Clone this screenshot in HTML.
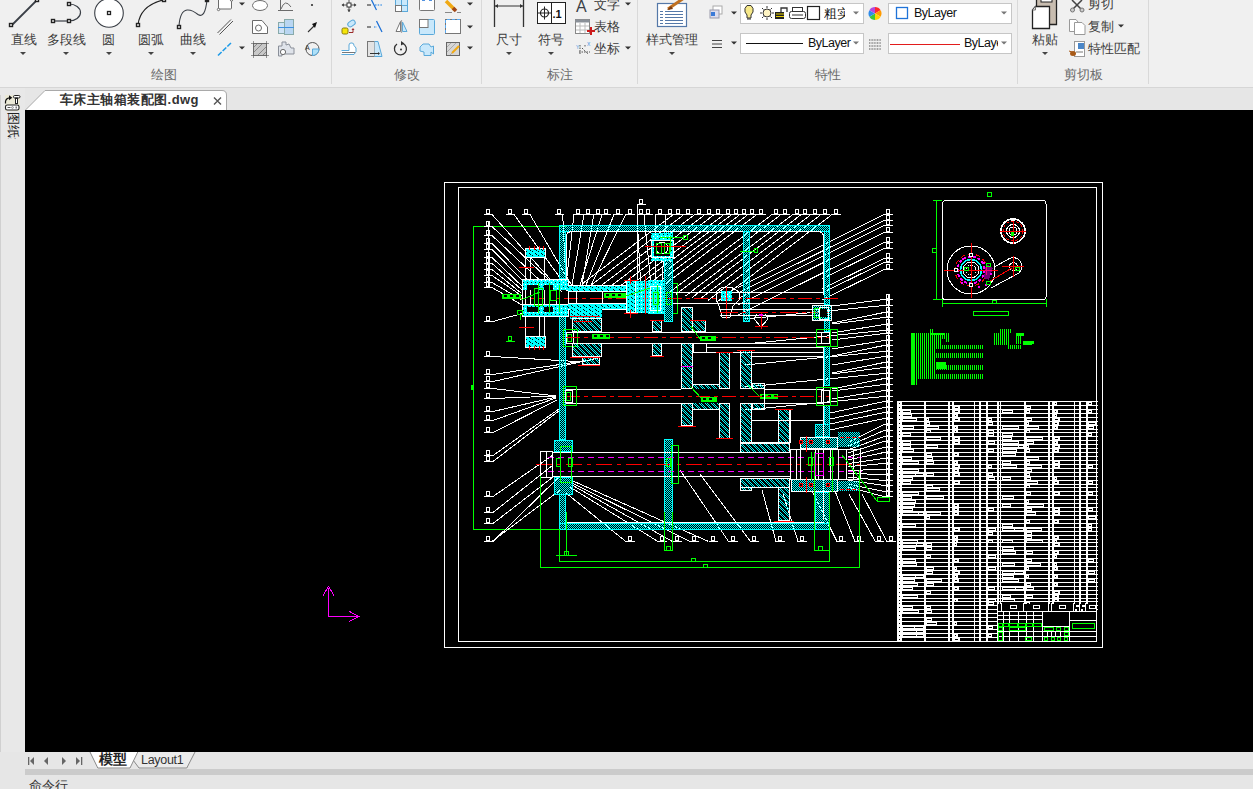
<!DOCTYPE html>
<html><head><meta charset="utf-8">
<style>
*{box-sizing:border-box}
html,body{margin:0;padding:0;width:1253px;height:789px;overflow:hidden;background:#e6e6e6;font-family:"Liberation Sans",sans-serif;}
.a{position:absolute}
#ribbon{left:0;top:0;width:1253px;height:88px;background:#f0f0f0;border-bottom:1px solid #d6d6d6}
.t{position:absolute;font-size:13px;line-height:13px;color:#3c3c3c;white-space:nowrap}
.g{position:absolute;font-size:13px;line-height:13px;color:#6a6a6a;white-space:nowrap}
.sep{position:absolute;top:0;width:1px;height:84px;background:#d9d9d9}
.arr{position:absolute;width:0;height:0;border-left:3px solid transparent;border-right:3px solid transparent;border-top:3px solid #444}
.box{position:absolute;background:#fff;border:1px solid #c8c8c8}
#canvas{left:25px;top:110px;width:1228px;height:642px;background:#000}
</style></head><body>
<div id="ribbon" class="a">
  <!-- draw group big buttons -->
  <svg class="a" style="left:0;top:0" width="1253" height="87">
<g fill="none" stroke="#3a3f46" stroke-width="1">
<line x1="11.5" y1="25.5" x2="37" y2="0" stroke-width="1.8"/>
<rect x="9.5" y="23.5" width="3" height="3" fill="#fff" stroke-width="1.4" stroke="#222"/>
<rect x="35.5" y="-1.5" width="3" height="3" fill="#fff" stroke-width="1.4" stroke="#222"/>
<line x1="54" y1="21" x2="69" y2="21" stroke-width="1.2"/>
<path d="M69 4 A11.5 8.5 0 0 1 69 21" stroke-width="1.2"/>
<rect x="51.5" y="19.5" width="3" height="3" fill="#fff" stroke-width="1.4" stroke="#222"/>
<rect x="67.5" y="19.5" width="3" height="3" fill="#fff" stroke-width="1.4" stroke="#222"/>
<rect x="67.5" y="2.5" width="3" height="3" fill="#fff" stroke-width="1.4" stroke="#222"/>
<circle cx="109" cy="13" r="14.3" fill="#fff" stroke-width="1.1"/>
<rect x="107.5" y="11.5" width="3" height="3" stroke-width="1.3" stroke="#222"/>
<path d="M138 25 Q140 6 163 0" stroke="#222" stroke-width="1.2"/>
<rect x="136.5" y="23.5" width="3" height="3" fill="#fff" stroke-width="1.4" stroke="#222"/>
<rect x="162.5" y="-1.5" width="3" height="3" fill="#fff" stroke-width="1.4" stroke="#222"/>
<path d="M179 26 Q180 11 187 10 Q192 9.5 198 14.5 Q205 19 207 0" stroke-width="1.1"/>
<rect x="177.5" y="25.5" width="3" height="3" fill="#fff" stroke-width="1.4" stroke="#222"/>
<rect x="205.5" y="-1.5" width="3" height="3" fill="#222" stroke-width="1.4" stroke="#222"/>
</g>
<g fill="none" stroke="#6b6b6b" stroke-width="1">
<rect x="218.5" y="-2.5" width="13" height="11.5" rx="1" fill="#fff"/>
<circle cx="218.5" cy="9.5" r="1.2" fill="#fff"/><circle cx="231.5" cy="0" r="1.2" fill="#fff"/>
<ellipse cx="260" cy="5.5" rx="7.5" ry="5" fill="#fff"/>
<path d="M280.5 0 V11 M278 10.5 H293 M281 9 Q285 -2 291 7" />
<path d="M217.5 33 L231 19.5 M219.5 34.5 L233 21" stroke="#555"/>
<path d="M252.5 33.5 V20.5 H262 L267.5 27 V33.5 Z" fill="#fff"/><circle cx="258.5" cy="28" r="3"/>
<path d="M218 55.5 L232 42" stroke="#1e9be8" stroke-width="1.6" stroke-dasharray="5 1.5"/>
<rect x="253.5" y="43.5" width="13" height="12" fill="#c8c8c8" stroke="#888"/>
<path d="M254 47 L258 43 M254 52 L263 43 M258 55 L266 47 M263 55 L266 52" stroke="#888"/>
<path d="M251 43.5 H269 M251 55.5 H269 M253.5 41 V58 M266.5 41 V58" stroke="#555" stroke-width=".6"/>
<path d="M278.5 46 H282 V42 H286 V45 L289 44 L291 48 H294 V54 H282 V56 H278.5 Z" fill="#dfe3ea" stroke="#8a8f99"/><circle cx="283" cy="52" r="2.6" fill="#fff"/>
<circle cx="312.5" cy="49" r="6.5" stroke="#555"/><path d="M312.5 49 V55.5 A6.5 6.5 0 0 0 319 49 Z" fill="#aee0f8" stroke="#5aa9da"/>
<text x="305" y="50" font-size="7" font-family="Liberation Sans" fill="#333" stroke="none">A</text>
</g>
<path d="M280 27.5 H294" stroke="#5aa9f0"/>
<rect x="278.5" y="22.5" width="9" height="11" fill="#cfe3f7" stroke="#8aa"/><rect x="284.5" y="19.5" width="9" height="15" fill="#b9d6f2" stroke="#8aa"/><path d="M278 27.5 H294" stroke="#3b8fe0"/>
<circle cx="312" cy="5" r="1.1" fill="#333"/>
<path d="M308 32 L314 26" stroke="#333" stroke-width="1.1"/><path d="M312 24 L317 22 L315 28 Z" fill="#111"/>
<g stroke="#333" fill="#333">
<path d="M342 5 H356 M349 -2 V12" stroke-width="0.9" stroke="#444"/>
<path d="M341.5 5 L344 3.2 V6.8 Z M356.5 5 L354 3.2 V6.8 Z M349 12 L347.2 9.5 H350.8 Z" fill="#444" stroke="none"/>
</g>
<rect x="347" y="3" width="4" height="4" fill="#fff" stroke="#333"/>
<path d="M367 5 H371" stroke="#666" stroke-width="1.5"/><path d="M371.5 0 L376.5 10" stroke="#1a6fd6" stroke-width="1.2"/><path d="M375 5 H383" stroke="#5aa0e8" stroke-width="1.3" stroke-dasharray="1.5 1.2"/>
<rect x="395.5" y="-0.5" width="12" height="12" fill="#c9e8fb" stroke="#5aa9da"/><path d="M401.5 -1 V12 M395 5.5 H408" stroke="#5aa9da"/><rect x="395.5" y="5.5" width="6" height="6" fill="#fff" stroke="#777"/>
<rect x="419.5" y="-1.5" width="15" height="12" rx="1" fill="#fff" stroke="#777"/><path d="M422 0 H425 M429 0 H432" stroke="#1a6fd6" stroke-width="1.5"/>
<path d="M446 1 L455 10" stroke="#f0a914" stroke-width="3.5"/><path d="M453 8 L456 11" stroke="#a0481b" stroke-width="3.5"/><path d="M445 12.5 H452 M457 12.5 H461" stroke="#888"/>
<rect x="342" y="28" width="6" height="6" rx="1.5" fill="#f5e50a" stroke="#887a10"/>
<rect x="347.5" y="21" width="8" height="5" rx="2.5" transform="rotate(-35 351.5 23.5)" fill="#c9e8fb" stroke="#5aa9da"/>
<path d="M349 32.5 H353 V30" fill="none" stroke="#9b2a2a" stroke-width="1"/><path d="M351.5 30 L353 28 L354.5 30 Z" fill="#9b2a2a"/>
<path d="M367 27 H371" stroke="#666" stroke-width="1.5"/><path d="M374 27 H377" stroke="#5aa0e8" stroke-width="1.3" stroke-dasharray="1.5 1.2"/><path d="M376.5 21 L382 32" stroke="#1a6fd6" stroke-width="1.2"/>
<path d="M400.5 21.5 L396 31.5 H400.5 Z" fill="#fff" stroke="#777"/><path d="M402.5 22 L407 31.5 H402.5 Z" fill="#c9e8fb" stroke="#5aa9da"/><path d="M401.5 20 V33" stroke="#aaa" stroke-width="1.2"/>
<rect x="419.5" y="19.5" width="15" height="15" rx="1" fill="#c9e8fb" stroke="#5aa9da"/><rect x="419.5" y="19.5" width="8.5" height="8" fill="#fff" stroke="#777"/>
<rect x="445.5" y="19.5" width="15" height="14" fill="#fff" stroke="#777"/><path d="M445.5 33 V19.5 H460" fill="none" stroke="#5aa9f0" stroke-dasharray="3 2"/>
<path d="M341.5 50.5 H349 V45 Q349 43 351 43 H352 Q354 43 354 45.5 L356 48 Q357 52 354 54.5 H341.5" fill="#fff" stroke="#5aa9da"/><path d="M342 52.5 H355" stroke="#777"/>
<rect x="367.5" y="41.5" width="7" height="15" fill="#e3e3e3" stroke="#777"/><path d="M374.5 41.5 H378 L382 56.5 H374.5" fill="#c9e8fb" stroke="#5aa9da"/><path d="M370 53.5 H378" stroke="#333"/><path d="M378 52 L380 53.5 L378 55Z" fill="#333"/>
<path d="M397 44 A6 6 0 1 0 403 43.5" fill="none" stroke="#333" stroke-width="1.3"/><path d="M401 41 L404.5 43.5 L401 45.5Z" fill="#333"/><circle cx="401" cy="49.5" r="1" fill="#333"/>
<path d="M420 47 L423 44 H429 L431 47 L433.5 46 V54 L431 52 V55.5 H424 V52 L420 51 Z" fill="#c9e8fb" stroke="#5aa9da"/>
<rect x="446.5" y="42.5" width="13" height="13" fill="#d6d6d6" stroke="#666"/><path d="M447 47 L451 43 M447 52 L456 43 M450 55 L459 46" stroke="#aaa"/><path d="M452 53 L459 46" stroke="#f0a914" stroke-width="2"/>
<path d="M494.5 0 V27 M523.5 0 V27" stroke="#333" stroke-width="1.3"/><path d="M495 6 H523" stroke="#333"/><path d="M495 6 L498 4 V8Z M523 6 L520 4 V8Z" fill="#333"/>
<rect x="537.5" y="2.5" width="28" height="21" fill="#fff" stroke="#222"/><path d="M551.5 2.5 V23.5" stroke="#222"/>
<circle cx="544.5" cy="13" r="4" fill="none" stroke="#222" stroke-width="1.2"/><path d="M538 13 H551 M544.5 6.5 V19.5" stroke="#222"/>
<text x="552.5" y="18" font-size="11" font-weight="bold" font-family="Liberation Sans" fill="#111">.1</text>
<text x="576" y="12" font-size="16" font-family="Liberation Sans" fill="#3a3f46">A</text>
<rect x="575.5" y="19.5" width="14" height="14" fill="#fff" stroke="#888"/><rect x="575.5" y="19.5" width="14" height="3" fill="#8b9199"/><path d="M576 26 H589 M576 30 H589 M580 23 V33 M585 23 V33" stroke="#bbb"/><path d="M591 27 V35 M587 31 H595" stroke="#cc1b1b" stroke-width="2"/>
<path d="M580 45 V55 M579 52 H590 M582 48 L588 54 M585 45 V47" stroke="#555" stroke-dasharray="1.5 1"/><text x="576" y="49" font-size="5" fill="#3b8fe0">Y</text><text x="587" y="46" font-size="5" fill="#3b8fe0">X</text>
<rect x="657.5" y="3.5" width="29" height="23" fill="#fff" stroke="#5478a8" stroke-width="1.2"/>
<path d="M660 11.5 H663 M665 11.5 H683" stroke="#5478a8" stroke-width="1"/>
<path d="M660 14.5 H663 M665 14.5 H683" stroke="#5478a8" stroke-width="1"/>
<path d="M660 17.5 H663 M665 17.5 H683" stroke="#5478a8" stroke-width="1"/>
<path d="M660 20.5 H663 M665 20.5 H683" stroke="#5478a8" stroke-width="1"/>
<path d="M660 23.5 H663 M665 23.5 H683" stroke="#5478a8" stroke-width="1"/>
<path d="M668 9 L684 -2" stroke="#c07020" stroke-width="3"/><path d="M667 10 L671 6 L673 9 Z" fill="#7a3a10"/>
<rect x="713" y="6" width="9" height="8" fill="#fff" stroke="#aaa"/><rect x="710" y="10" width="9" height="8" fill="#dde" stroke="#99a"/><rect x="711" y="12" width="4" height="4" fill="#3b7ad8"/>
<path d="M712 40.5 H722 M712 44 H722 M712 47.5 H722" stroke="#444" stroke-width="1.2"/>
<rect x="740.5" y="3.5" width="123" height="20" fill="#fff" stroke="#c6c6c6"/>
<rect x="740.5" y="33.5" width="123" height="20" fill="#fff" stroke="#c6c6c6"/>
<rect x="888.5" y="3.5" width="123" height="20" fill="#fff" stroke="#c6c6c6"/>
<rect x="888.5" y="33.5" width="123" height="20" fill="#fff" stroke="#c6c6c6"/>
<path d="M747 5.5 Q744 8 745 12 L747 15 V18 H751 V15 L753 12 Q754 8 751 5.5 Z" fill="#f7e98a" stroke="#333"/><path d="M747 19 H751" stroke="#333"/>
<circle cx="767" cy="13" r="4" fill="#fdf3c2" stroke="#333"/><path d="M767 6 V8 M767 18 V20 M760 13 H762 M772 13 H774 M762 8 L763.5 9.5 M772 8 L770.5 9.5 M762 18 L763.5 16.5 M772 18 L770.5 16.5" stroke="#333"/>
<rect x="775" y="12" width="9" height="7" fill="#222"/><path d="M776 14 H784 M776 16.5 H784" stroke="#e8d000" stroke-width="1"/><path d="M781 12 V8 H787 V12" fill="none" stroke="#333" stroke-width="1.3"/>
<rect x="789.5" y="11.5" width="16" height="7" rx="2" fill="#fff" stroke="#333"/><rect x="792.5" y="7.5" width="10" height="4" fill="#fff" stroke="#333"/><path d="M792 15 H803" stroke="#333"/>
<rect x="807.5" y="6.5" width="12" height="13" fill="#fff" stroke="#222" stroke-width="1.2"/>
<circle cx="875" cy="13.5" r="6.5" fill="#fff"/>
<path d="M875 13.5 L875.00 7.00 A6.5 6.5 0 0 1 880.63 10.25 Z" fill="#ff2a2a"/>
<path d="M875 13.5 L880.63 10.25 A6.5 6.5 0 0 1 880.63 16.75 Z" fill="#ff9a00"/>
<path d="M875 13.5 L880.63 16.75 A6.5 6.5 0 0 1 875.00 20.00 Z" fill="#ffd500"/>
<path d="M875 13.5 L875.00 20.00 A6.5 6.5 0 0 1 869.37 16.75 Z" fill="#3cc63c"/>
<path d="M875 13.5 L869.37 16.75 A6.5 6.5 0 0 1 869.37 10.25 Z" fill="#2f8ce8"/>
<path d="M875 13.5 L869.37 10.25 A6.5 6.5 0 0 1 875.00 7.00 Z" fill="#b04ae0"/>
<path d="M869 40 H881 M869 43 H881 M869 46 H881 M869 49 H881" stroke="#555" stroke-dasharray="1 .6"/>
<rect x="896.5" y="7.5" width="11" height="11" fill="none" stroke="#1f73d8" stroke-width="1.3"/>
<path d="M746 43.5 H803" stroke="#111" stroke-width="1.2"/>
<path d="M890 44.5 H960" stroke="#e21c1c" stroke-width="1.2"/>
<path d="M1036.5 0 V24.5 H1056.5 V0" fill="#c8bdb0" stroke="#222" stroke-width="1.3"/><rect x="1041" y="-2" width="11" height="4" fill="#fff" stroke="#222"/>
<path d="M1035.5 6.5 H1049.5 V28.5 H1032.5 V10 Z" fill="#fff" stroke="#222" stroke-width="1.3"/><path d="M1032.5 10 H1035.5 V6.5" fill="#ddd" stroke="#777"/>
<path d="M1072 0 L1083 11 M1082 0 L1071 11" stroke="#444" stroke-width="1.5"/><circle cx="1072.5" cy="10" r="2" fill="#ccc" stroke="#777"/><circle cx="1082" cy="10" r="2" fill="#ccc" stroke="#777"/>
<path d="M1069.5 19.5 H1076 L1078 22 V31.5 H1069.5 Z" fill="#fff" stroke="#999"/><path d="M1074.5 22.5 H1082 L1085 25.5 V34.5 H1074.5 Z" fill="#fff" stroke="#999"/>
<rect x="1074.5" y="41.5" width="10" height="15" fill="#fff" stroke="#999"/><rect x="1078" y="43" width="6" height="6" fill="#4a86c8"/><path d="M1076 52 H1083" stroke="#777"/><ellipse cx="1073" cy="53.5" rx="3" ry="2.5" fill="#a85a18"/><path d="M1069 51 L1072 52" stroke="#a85a18"/>
<path d="M239 2.5 H245 L242 5.5 Z" fill="#333"/>
<path d="M239 46.5 H245 L242 49.5 Z" fill="#333"/>
<path d="M467 2.5 H473 L470 5.5 Z" fill="#333"/>
<path d="M467 25.5 H473 L470 28.5 Z" fill="#333"/>
<path d="M467 46.5 H473 L470 49.5 Z" fill="#333"/>
<path d="M625 2.5 H631 L628 5.5 Z" fill="#333"/>
<path d="M625 46.5 H631 L628 49.5 Z" fill="#333"/>
<path d="M731 11.5 H737 L734 14.5 Z" fill="#333"/>
<path d="M731 41.5 H737 L734 44.5 Z" fill="#333"/>
<path d="M1118 24.5 H1124 L1121 27.5 Z" fill="#333"/>
<path d="M853 11.5 H859 L856 14.5 Z" fill="#777"/>
<path d="M853 41.5 H859 L856 44.5 Z" fill="#777"/>
<path d="M1001 11.5 H1007 L1004 14.5 Z" fill="#777"/>
<path d="M1001 41.5 H1007 L1004 44.5 Z" fill="#777"/>
</svg>

  <div class="t" style="left:11px;top:33px">直线</div>
  <div class="t" style="left:47px;top:33px">多段线</div>
  <div class="t" style="left:102px;top:33px">圆</div>
  <div class="t" style="left:138px;top:33px">圆弧</div>
  <div class="t" style="left:180px;top:33px">曲线</div>
  <div class="arr" style="left:20px;top:52px"></div>
  <div class="arr" style="left:63px;top:52px"></div>
  <div class="arr" style="left:106px;top:52px"></div>
  <div class="arr" style="left:148px;top:52px"></div>
  <div class="arr" style="left:190px;top:52px"></div>

  <div class="t" style="left:496px;top:33px">尺寸</div>
  <div class="t" style="left:538px;top:33px">符号</div>
  <div class="t" style="left:594px;top:-2px">文字</div>
  <div class="t" style="left:594px;top:20px">表格</div>
  <div class="t" style="left:594px;top:42px">坐标</div>
  <div class="arr" style="left:506px;top:52px"></div>
  <div class="arr" style="left:548px;top:52px"></div>
  <div class="t" style="left:646px;top:33px">样式管理</div>
  <div class="arr" style="left:669px;top:52px"></div>
  <div class="t" style="left:824px;top:7px;font-size:13px;width:21px;overflow:hidden;color:#111">粗实</div>
  <div class="t" style="left:808px;top:37px;color:#111;font-size:12.5px;letter-spacing:-0.5px">ByLayer</div>
  <div class="t" style="left:914px;top:7px;color:#111;font-size:12.5px;letter-spacing:-0.5px">ByLayer</div>
  <div class="t" style="left:964px;top:37px;color:#111;width:34px;overflow:hidden;font-size:12.5px;letter-spacing:-0.5px">ByLayer</div>
  <div class="t" style="left:1032px;top:33px">粘贴</div>
  <div class="arr" style="left:1042px;top:52px"></div>
  <div class="t" style="left:1088px;top:-3px">剪切</div>
  <div class="t" style="left:1088px;top:20px">复制</div>
  <div class="t" style="left:1088px;top:42px">特性匹配</div>
  <div class="g" style="left:151px;top:68px">绘图</div>
  <div class="sep" style="left:331px"></div>
  <div class="g" style="left:394px;top:68px">修改</div>
  <div class="sep" style="left:481px"></div>
  <div class="g" style="left:547px;top:68px">标注</div>
  <div class="sep" style="left:637px"></div>
  <div class="g" style="left:815px;top:68px">特性</div>
  <div class="sep" style="left:1017px"></div>
  <div class="g" style="left:1064px;top:68px">剪切板</div>
  <div class="sep" style="left:1148px"></div>
</div>
<div id="canvas" class="a"></div>
<svg class="a" style="left:25px;top:110px" width="1228" height="642" viewBox="25 110 1228 642" shape-rendering="crispEdges">
<defs>
<pattern id="hw" width="2" height="2" patternUnits="userSpaceOnUse"><rect x="0" y="0" width="1" height="1" fill="#00ffff"/><rect x="1" y="1" width="1" height="1" fill="#00ffff"/></pattern>
<pattern id="hg" width="6" height="6" patternUnits="userSpaceOnUse"><rect x="2" y="0" width="1" height="1" fill="#00ffff"/><rect x="4" y="0" width="1" height="1" fill="#00ffff"/><rect x="3" y="1" width="1" height="1" fill="#00ffff"/><rect x="5" y="1" width="1" height="1" fill="#00ffff"/><rect x="0" y="2" width="1" height="1" fill="#00ffff"/><rect x="4" y="2" width="1" height="1" fill="#00ffff"/><rect x="1" y="3" width="1" height="1" fill="#00ffff"/><rect x="5" y="3" width="1" height="1" fill="#00ffff"/><rect x="0" y="4" width="1" height="1" fill="#00ffff"/><rect x="2" y="4" width="1" height="1" fill="#00ffff"/><rect x="1" y="5" width="1" height="1" fill="#00ffff"/><rect x="3" y="5" width="1" height="1" fill="#00ffff"/></pattern>
<pattern id="hc" width="4" height="4" patternUnits="userSpaceOnUse"><rect x="0" y="0" width="1" height="1" fill="#00ffff"/><rect x="1" y="0" width="1" height="1" fill="#ffffff"/><rect x="2" y="0" width="1" height="1" fill="#00ffff"/><rect x="3" y="0" width="1" height="1" fill="#00ffff"/><rect x="0" y="1" width="1" height="1" fill="#00ffff"/><rect x="1" y="1" width="1" height="1" fill="#00ffff"/><rect x="2" y="1" width="1" height="1" fill="#00ffff"/><rect x="3" y="1" width="1" height="1" fill="#00ffff"/><rect x="0" y="2" width="1" height="1" fill="#00ffff"/><rect x="1" y="2" width="1" height="1" fill="#00ffff"/><rect x="2" y="2" width="1" height="1" fill="#00ffff"/><rect x="0" y="3" width="1" height="1" fill="#00ffff"/><rect x="1" y="3" width="1" height="1" fill="#00ffff"/><rect x="2" y="3" width="1" height="1" fill="#00ffff"/><rect x="3" y="3" width="1" height="1" fill="#00ffff"/></pattern>
<pattern id="hs" width="6" height="4" patternUnits="userSpaceOnUse"><rect width="6" height="4" fill="#00ffff"/><rect x="1" y="1" width="1" height="1" fill="#000"/><rect x="2" y="2" width="1" height="1" fill="#000"/><rect x="4" y="3" width="1" height="1" fill="#000"/></pattern>
<pattern id="gbar" width="2" height="4" patternUnits="userSpaceOnUse"><rect width="1" height="4" fill="#00ff00"/></pattern>
</defs>
<path d="M328.5 588 V616.5 H358.5" fill="none" stroke="#ff00ff" stroke-width="1.3"/>
<path d="M323 595.5 L328.5 586.5 L334 595.5 M349.5 611.5 L358.5 616.5 L349.5 621.5" fill="none" stroke="#ff00ff" stroke-width="1"/>
<rect x="444.5" y="182.5" width="658" height="465" stroke="#ffffff" fill="none" stroke-width="1"/>
<rect x="458.5" y="187.5" width="638" height="454" stroke="#ffffff" fill="none" stroke-width="1"/>
<line x1="473.5" y1="226" x2="473.5" y2="530" stroke="#00ff00" stroke-width="1"/>
<line x1="473" y1="226.5" x2="566" y2="226.5" stroke="#00ff00" stroke-width="1"/>
<line x1="473" y1="529.5" x2="560" y2="529.5" stroke="#00ff00" stroke-width="1"/>
<rect x="471" y="385" width="3" height="5" fill="#00ff00"/>
<line x1="492" y1="214.5" x2="560" y2="290" stroke="#ffffff" stroke-width="1"/>
<line x1="514" y1="214.5" x2="566" y2="286" stroke="#ffffff" stroke-width="1"/>
<line x1="530" y1="214.5" x2="572" y2="286" stroke="#ffffff" stroke-width="1"/>
<line x1="562.7" y1="214.5" x2="566" y2="283" stroke="#ffffff" stroke-width="1"/>
<line x1="574" y1="214.5" x2="566" y2="285" stroke="#ffffff" stroke-width="1"/>
<line x1="584" y1="214.5" x2="572" y2="285" stroke="#ffffff" stroke-width="1"/>
<line x1="593.8" y1="214.5" x2="582" y2="285" stroke="#ffffff" stroke-width="1"/>
<line x1="602" y1="214.5" x2="580" y2="285" stroke="#ffffff" stroke-width="1"/>
<line x1="614" y1="214.5" x2="586" y2="285" stroke="#ffffff" stroke-width="1"/>
<line x1="625.7" y1="214.5" x2="591" y2="285" stroke="#ffffff" stroke-width="1"/>
<line x1="637" y1="214.5" x2="641" y2="290" stroke="#ffffff" stroke-width="1"/>
<line x1="644" y1="214.5" x2="651" y2="285" stroke="#ffffff" stroke-width="1"/>
<line x1="656" y1="214.5" x2="655" y2="285" stroke="#ffffff" stroke-width="1"/>
<line x1="666" y1="214.5" x2="662" y2="285" stroke="#ffffff" stroke-width="1"/>
<line x1="673.5" y1="214.5" x2="582.6776315789474" y2="283.525" stroke="#ffffff" stroke-width="1"/>
<line x1="684" y1="214.5" x2="592.2105263157895" y2="284.26" stroke="#ffffff" stroke-width="1"/>
<line x1="694.8" y1="214.5" x2="602.0157894736841" y2="285.016" stroke="#ffffff" stroke-width="1"/>
<line x1="705" y1="214.5" x2="611.2763157894736" y2="285.73" stroke="#ffffff" stroke-width="1"/>
<line x1="714.3" y1="214.5" x2="619.7197368421052" y2="286.381" stroke="#ffffff" stroke-width="1"/>
<line x1="724" y1="214.5" x2="628.5263157894736" y2="287.06" stroke="#ffffff" stroke-width="1"/>
<line x1="731.7" y1="214.5" x2="635.517105263158" y2="287.599" stroke="#ffffff" stroke-width="1"/>
<line x1="740" y1="214.5" x2="643.0526315789474" y2="288.18" stroke="#ffffff" stroke-width="1"/>
<line x1="748" y1="214.5" x2="650.3157894736842" y2="288.74" stroke="#ffffff" stroke-width="1"/>
<line x1="756.7" y1="214.5" x2="658.2144736842106" y2="289.349" stroke="#ffffff" stroke-width="1"/>
<line x1="772" y1="214.5" x2="668.8301435406698" y2="292.90909090909093" stroke="#ffffff" stroke-width="1"/>
<line x1="781" y1="214.5" x2="676.0358851674641" y2="294.27272727272725" stroke="#ffffff" stroke-width="1"/>
<line x1="792.7" y1="214.5" x2="685.4033492822966" y2="296.04545454545456" stroke="#ffffff" stroke-width="1"/>
<line x1="801.3" y1="214.5" x2="692.2888357256778" y2="297.3484848484848" stroke="#ffffff" stroke-width="1"/>
<line x1="811" y1="214.5" x2="700.055023923445" y2="298.8181818181818" stroke="#ffffff" stroke-width="1"/>
<line x1="821" y1="214.5" x2="708.061403508772" y2="300.3333333333333" stroke="#ffffff" stroke-width="1"/>
<line x1="832" y1="214.5" x2="716.8684210526316" y2="302.0" stroke="#ffffff" stroke-width="1"/>
<line x1="637.5" y1="204" x2="637.5" y2="283" stroke="#ffffff" stroke-width="1"/>
<rect x="639.5" y="199.5" width="3" height="4" fill="none" stroke="#ffffff"/>
<line x1="637" y1="204.5" x2="646" y2="204.5" stroke="#ffffff" stroke-width="1"/>
<rect x="486.5" y="209.5" width="3" height="4" fill="none" stroke="#ffffff"/>
<line x1="484" y1="214.5" x2="493" y2="214.5" stroke="#ffffff" stroke-width="1"/>
<rect x="508.5" y="209.5" width="3" height="4" fill="none" stroke="#ffffff"/>
<line x1="506" y1="214.5" x2="515" y2="214.5" stroke="#ffffff" stroke-width="1"/>
<rect x="524.5" y="209.5" width="3" height="4" fill="none" stroke="#ffffff"/>
<line x1="522" y1="214.5" x2="531" y2="214.5" stroke="#ffffff" stroke-width="1"/>
<rect x="557.2" y="209.5" width="3" height="4" fill="none" stroke="#ffffff"/>
<line x1="554.7" y1="214.5" x2="563.7" y2="214.5" stroke="#ffffff" stroke-width="1"/>
<rect x="576.5" y="209.5" width="3" height="4" fill="none" stroke="#ffffff"/>
<line x1="574" y1="214.5" x2="583" y2="214.5" stroke="#ffffff" stroke-width="1"/>
<rect x="586.5" y="209.5" width="3" height="4" fill="none" stroke="#ffffff"/>
<line x1="584" y1="214.5" x2="593" y2="214.5" stroke="#ffffff" stroke-width="1"/>
<rect x="596.3" y="209.5" width="3" height="4" fill="none" stroke="#ffffff"/>
<line x1="593.8" y1="214.5" x2="602.8" y2="214.5" stroke="#ffffff" stroke-width="1"/>
<rect x="604.5" y="209.5" width="3" height="4" fill="none" stroke="#ffffff"/>
<line x1="602" y1="214.5" x2="611" y2="214.5" stroke="#ffffff" stroke-width="1"/>
<rect x="616.5" y="209.5" width="3" height="4" fill="none" stroke="#ffffff"/>
<line x1="614" y1="214.5" x2="623" y2="214.5" stroke="#ffffff" stroke-width="1"/>
<rect x="628.2" y="209.5" width="3" height="4" fill="none" stroke="#ffffff"/>
<line x1="625.7" y1="214.5" x2="634.7" y2="214.5" stroke="#ffffff" stroke-width="1"/>
<rect x="639.5" y="209.5" width="3" height="4" fill="none" stroke="#ffffff"/>
<line x1="637" y1="214.5" x2="646" y2="214.5" stroke="#ffffff" stroke-width="1"/>
<rect x="646.5" y="209.5" width="3" height="4" fill="none" stroke="#ffffff"/>
<line x1="644" y1="214.5" x2="653" y2="214.5" stroke="#ffffff" stroke-width="1"/>
<rect x="658.5" y="209.5" width="3" height="4" fill="none" stroke="#ffffff"/>
<line x1="656" y1="214.5" x2="665" y2="214.5" stroke="#ffffff" stroke-width="1"/>
<rect x="668.5" y="209.5" width="3" height="4" fill="none" stroke="#ffffff"/>
<line x1="666" y1="214.5" x2="675" y2="214.5" stroke="#ffffff" stroke-width="1"/>
<rect x="676.0" y="209.5" width="3" height="4" fill="none" stroke="#ffffff"/>
<line x1="673.5" y1="214.5" x2="682.5" y2="214.5" stroke="#ffffff" stroke-width="1"/>
<rect x="686.5" y="209.5" width="3" height="4" fill="none" stroke="#ffffff"/>
<line x1="684" y1="214.5" x2="693" y2="214.5" stroke="#ffffff" stroke-width="1"/>
<rect x="697.3" y="209.5" width="3" height="4" fill="none" stroke="#ffffff"/>
<line x1="694.8" y1="214.5" x2="703.8" y2="214.5" stroke="#ffffff" stroke-width="1"/>
<rect x="707.5" y="209.5" width="3" height="4" fill="none" stroke="#ffffff"/>
<line x1="705" y1="214.5" x2="714" y2="214.5" stroke="#ffffff" stroke-width="1"/>
<rect x="716.8" y="209.5" width="3" height="4" fill="none" stroke="#ffffff"/>
<line x1="714.3" y1="214.5" x2="723.3" y2="214.5" stroke="#ffffff" stroke-width="1"/>
<rect x="726.5" y="209.5" width="3" height="4" fill="none" stroke="#ffffff"/>
<line x1="724" y1="214.5" x2="733" y2="214.5" stroke="#ffffff" stroke-width="1"/>
<rect x="734.2" y="209.5" width="3" height="4" fill="none" stroke="#ffffff"/>
<line x1="731.7" y1="214.5" x2="740.7" y2="214.5" stroke="#ffffff" stroke-width="1"/>
<rect x="742.5" y="209.5" width="3" height="4" fill="none" stroke="#ffffff"/>
<line x1="740" y1="214.5" x2="749" y2="214.5" stroke="#ffffff" stroke-width="1"/>
<rect x="750.5" y="209.5" width="3" height="4" fill="none" stroke="#ffffff"/>
<line x1="748" y1="214.5" x2="757" y2="214.5" stroke="#ffffff" stroke-width="1"/>
<rect x="759.2" y="209.5" width="3" height="4" fill="none" stroke="#ffffff"/>
<line x1="756.7" y1="214.5" x2="765.7" y2="214.5" stroke="#ffffff" stroke-width="1"/>
<rect x="774.5" y="209.5" width="3" height="4" fill="none" stroke="#ffffff"/>
<line x1="772" y1="214.5" x2="781" y2="214.5" stroke="#ffffff" stroke-width="1"/>
<rect x="783.5" y="209.5" width="3" height="4" fill="none" stroke="#ffffff"/>
<line x1="781" y1="214.5" x2="790" y2="214.5" stroke="#ffffff" stroke-width="1"/>
<rect x="795.2" y="209.5" width="3" height="4" fill="none" stroke="#ffffff"/>
<line x1="792.7" y1="214.5" x2="801.7" y2="214.5" stroke="#ffffff" stroke-width="1"/>
<rect x="803.8" y="209.5" width="3" height="4" fill="none" stroke="#ffffff"/>
<line x1="801.3" y1="214.5" x2="810.3" y2="214.5" stroke="#ffffff" stroke-width="1"/>
<rect x="813.5" y="209.5" width="3" height="4" fill="none" stroke="#ffffff"/>
<line x1="811" y1="214.5" x2="820" y2="214.5" stroke="#ffffff" stroke-width="1"/>
<rect x="823.5" y="209.5" width="3" height="4" fill="none" stroke="#ffffff"/>
<line x1="821" y1="214.5" x2="830" y2="214.5" stroke="#ffffff" stroke-width="1"/>
<rect x="834.5" y="209.5" width="3" height="4" fill="none" stroke="#ffffff"/>
<line x1="832" y1="214.5" x2="841" y2="214.5" stroke="#ffffff" stroke-width="1"/>
<line x1="488.5" y1="222" x2="488.5" y2="288" stroke="#ffffff" stroke-width="1"/>
<rect x="486.5" y="221.5" width="3" height="4" fill="none" stroke="#ffffff"/>
<line x1="484" y1="226.5" x2="493" y2="226.5" stroke="#ffffff" stroke-width="1"/>
<rect x="486.5" y="230.5" width="3" height="4" fill="none" stroke="#ffffff"/>
<line x1="484" y1="235.5" x2="493" y2="235.5" stroke="#ffffff" stroke-width="1"/>
<rect x="486.5" y="238.5" width="3" height="4" fill="none" stroke="#ffffff"/>
<line x1="484" y1="243.5" x2="493" y2="243.5" stroke="#ffffff" stroke-width="1"/>
<rect x="486.5" y="244.5" width="3" height="4" fill="none" stroke="#ffffff"/>
<line x1="484" y1="249.5" x2="493" y2="249.5" stroke="#ffffff" stroke-width="1"/>
<rect x="486.5" y="252.5" width="3" height="4" fill="none" stroke="#ffffff"/>
<line x1="484" y1="257.5" x2="493" y2="257.5" stroke="#ffffff" stroke-width="1"/>
<rect x="486.5" y="258.5" width="3" height="4" fill="none" stroke="#ffffff"/>
<line x1="484" y1="263.5" x2="493" y2="263.5" stroke="#ffffff" stroke-width="1"/>
<rect x="486.5" y="264.5" width="3" height="4" fill="none" stroke="#ffffff"/>
<line x1="484" y1="269.5" x2="493" y2="269.5" stroke="#ffffff" stroke-width="1"/>
<rect x="486.5" y="270.5" width="3" height="4" fill="none" stroke="#ffffff"/>
<line x1="484" y1="275.5" x2="493" y2="275.5" stroke="#ffffff" stroke-width="1"/>
<rect x="486.5" y="277.5" width="3" height="4" fill="none" stroke="#ffffff"/>
<line x1="484" y1="282.5" x2="493" y2="282.5" stroke="#ffffff" stroke-width="1"/>
<rect x="486.5" y="282.5" width="3" height="4" fill="none" stroke="#ffffff"/>
<line x1="484" y1="287.5" x2="493" y2="287.5" stroke="#ffffff" stroke-width="1"/>
<line x1="492" y1="226.5" x2="562" y2="292" stroke="#ffffff" stroke-width="1"/>
<line x1="492" y1="235.5" x2="548" y2="288" stroke="#ffffff" stroke-width="1"/>
<line x1="492" y1="243.5" x2="532" y2="284" stroke="#ffffff" stroke-width="1"/>
<line x1="492" y1="249.5" x2="528" y2="286" stroke="#ffffff" stroke-width="1"/>
<line x1="492" y1="257.5" x2="524" y2="288" stroke="#ffffff" stroke-width="1"/>
<line x1="492" y1="263.5" x2="522" y2="290" stroke="#ffffff" stroke-width="1"/>
<line x1="492" y1="269.5" x2="521" y2="293" stroke="#ffffff" stroke-width="1"/>
<line x1="492" y1="275.5" x2="522" y2="296" stroke="#ffffff" stroke-width="1"/>
<line x1="492" y1="282.5" x2="522" y2="300" stroke="#ffffff" stroke-width="1"/>
<line x1="492" y1="287.5" x2="522" y2="305" stroke="#ffffff" stroke-width="1"/>
<rect x="486.5" y="316.5" width="3" height="4" fill="none" stroke="#ffffff"/>
<line x1="484" y1="321.5" x2="493" y2="321.5" stroke="#ffffff" stroke-width="1"/>
<line x1="493" y1="321.5" x2="524" y2="313" stroke="#ffffff" stroke-width="1"/>
<rect x="486.5" y="351.5" width="3" height="4" fill="none" stroke="#ffffff"/>
<line x1="484" y1="356.5" x2="493" y2="356.5" stroke="#ffffff" stroke-width="1"/>
<line x1="493" y1="356.5" x2="584" y2="362" stroke="#ffffff" stroke-width="1"/>
<rect x="486.5" y="369.5" width="3" height="4" fill="none" stroke="#ffffff"/>
<line x1="484" y1="374.5" x2="493" y2="374.5" stroke="#ffffff" stroke-width="1"/>
<line x1="493" y1="374.5" x2="590" y2="360" stroke="#ffffff" stroke-width="1"/>
<rect x="486.5" y="376.5" width="3" height="4" fill="none" stroke="#ffffff"/>
<line x1="484" y1="381.5" x2="493" y2="381.5" stroke="#ffffff" stroke-width="1"/>
<line x1="493" y1="381.5" x2="598" y2="358" stroke="#ffffff" stroke-width="1"/>
<rect x="486.5" y="383.5" width="3" height="4" fill="none" stroke="#ffffff"/>
<line x1="484" y1="388.5" x2="493" y2="388.5" stroke="#ffffff" stroke-width="1"/>
<line x1="493" y1="388.5" x2="556" y2="396" stroke="#ffffff" stroke-width="1"/>
<rect x="486.5" y="393.5" width="3" height="4" fill="none" stroke="#ffffff"/>
<line x1="484" y1="398.5" x2="493" y2="398.5" stroke="#ffffff" stroke-width="1"/>
<line x1="493" y1="398.5" x2="556" y2="396" stroke="#ffffff" stroke-width="1"/>
<rect x="486.5" y="406.5" width="3" height="4" fill="none" stroke="#ffffff"/>
<line x1="484" y1="411.5" x2="493" y2="411.5" stroke="#ffffff" stroke-width="1"/>
<line x1="493" y1="411.5" x2="556" y2="397" stroke="#ffffff" stroke-width="1"/>
<rect x="486.5" y="415.5" width="3" height="4" fill="none" stroke="#ffffff"/>
<line x1="484" y1="420.5" x2="493" y2="420.5" stroke="#ffffff" stroke-width="1"/>
<line x1="493" y1="420.5" x2="556" y2="398" stroke="#ffffff" stroke-width="1"/>
<rect x="486.5" y="427.5" width="3" height="4" fill="none" stroke="#ffffff"/>
<line x1="484" y1="432.5" x2="493" y2="432.5" stroke="#ffffff" stroke-width="1"/>
<line x1="493" y1="432.5" x2="557" y2="400" stroke="#ffffff" stroke-width="1"/>
<rect x="486.5" y="450.5" width="3" height="4" fill="none" stroke="#ffffff"/>
<line x1="484" y1="455.5" x2="493" y2="455.5" stroke="#ffffff" stroke-width="1"/>
<line x1="493" y1="455.5" x2="559" y2="409" stroke="#ffffff" stroke-width="1"/>
<rect x="486.5" y="456.5" width="3" height="4" fill="none" stroke="#ffffff"/>
<line x1="484" y1="461.5" x2="493" y2="461.5" stroke="#ffffff" stroke-width="1"/>
<line x1="493" y1="461.5" x2="560" y2="410" stroke="#ffffff" stroke-width="1"/>
<rect x="486.5" y="491.5" width="3" height="4" fill="none" stroke="#ffffff"/>
<line x1="484" y1="496.5" x2="493" y2="496.5" stroke="#ffffff" stroke-width="1"/>
<line x1="493" y1="496.5" x2="553" y2="455" stroke="#ffffff" stroke-width="1"/>
<rect x="486.5" y="507.5" width="3" height="4" fill="none" stroke="#ffffff"/>
<line x1="484" y1="512.5" x2="493" y2="512.5" stroke="#ffffff" stroke-width="1"/>
<line x1="493" y1="512.5" x2="553" y2="465" stroke="#ffffff" stroke-width="1"/>
<rect x="486.5" y="518.5" width="3" height="4" fill="none" stroke="#ffffff"/>
<line x1="484" y1="523.5" x2="493" y2="523.5" stroke="#ffffff" stroke-width="1"/>
<line x1="493" y1="523.5" x2="553" y2="477" stroke="#ffffff" stroke-width="1"/>
<rect x="486.5" y="536.5" width="3" height="4" fill="none" stroke="#ffffff"/>
<line x1="484" y1="541.5" x2="493" y2="541.5" stroke="#ffffff" stroke-width="1"/>
<line x1="493" y1="541.5" x2="559" y2="477" stroke="#ffffff" stroke-width="1"/>
<rect x="508.5" y="336.5" width="3" height="4" fill="none" stroke="#00ff00"/>
<line x1="506" y1="341.5" x2="515" y2="341.5" stroke="#00ff00" stroke-width="1"/>
<rect x="886.5" y="209.5" width="3" height="4" fill="none" stroke="#ffffff"/>
<line x1="884" y1="214.5" x2="893" y2="214.5" stroke="#ffffff" stroke-width="1"/>
<rect x="886.5" y="215.5" width="3" height="4" fill="none" stroke="#ffffff"/>
<line x1="884" y1="220.5" x2="893" y2="220.5" stroke="#ffffff" stroke-width="1"/>
<rect x="886.5" y="220.5" width="3" height="4" fill="none" stroke="#ffffff"/>
<line x1="884" y1="225.5" x2="893" y2="225.5" stroke="#ffffff" stroke-width="1"/>
<rect x="886.5" y="227.5" width="3" height="4" fill="none" stroke="#ffffff"/>
<line x1="884" y1="232.5" x2="893" y2="232.5" stroke="#ffffff" stroke-width="1"/>
<rect x="886.5" y="237.5" width="3" height="4" fill="none" stroke="#ffffff"/>
<line x1="884" y1="242.5" x2="893" y2="242.5" stroke="#ffffff" stroke-width="1"/>
<rect x="886.5" y="243.5" width="3" height="4" fill="none" stroke="#ffffff"/>
<line x1="884" y1="248.5" x2="893" y2="248.5" stroke="#ffffff" stroke-width="1"/>
<rect x="886.5" y="253.5" width="3" height="4" fill="none" stroke="#ffffff"/>
<line x1="884" y1="258.5" x2="893" y2="258.5" stroke="#ffffff" stroke-width="1"/>
<rect x="886.5" y="257.5" width="3" height="4" fill="none" stroke="#ffffff"/>
<line x1="884" y1="262.5" x2="893" y2="262.5" stroke="#ffffff" stroke-width="1"/>
<rect x="886.5" y="264.5" width="3" height="4" fill="none" stroke="#ffffff"/>
<line x1="884" y1="269.5" x2="893" y2="269.5" stroke="#ffffff" stroke-width="1"/>
<line x1="884" y1="214.5" x2="738" y2="287.5" stroke="#ffffff" stroke-width="1"/>
<line x1="884" y1="220.5" x2="738" y2="293" stroke="#ffffff" stroke-width="1"/>
<line x1="884" y1="225.5" x2="738" y2="298.5" stroke="#ffffff" stroke-width="1"/>
<line x1="884" y1="232.5" x2="738" y2="305" stroke="#ffffff" stroke-width="1"/>
<line x1="884" y1="242.5" x2="738" y2="315" stroke="#ffffff" stroke-width="1"/>
<line x1="884" y1="248.5" x2="822" y2="279" stroke="#ffffff" stroke-width="1"/>
<line x1="884" y1="258.5" x2="822" y2="289" stroke="#ffffff" stroke-width="1"/>
<line x1="884" y1="262.5" x2="822" y2="293" stroke="#ffffff" stroke-width="1"/>
<line x1="884" y1="269.5" x2="822" y2="300" stroke="#ffffff" stroke-width="1"/>
<line x1="888.5" y1="295" x2="888.5" y2="497" stroke="#ffffff" stroke-width="1"/>
<rect x="886.5" y="294.5" width="3" height="4" fill="none" stroke="#ffffff"/>
<line x1="884" y1="299.5" x2="893" y2="299.5" stroke="#ffffff" stroke-width="1"/>
<rect x="886.5" y="300.5" width="3" height="4" fill="none" stroke="#ffffff"/>
<line x1="884" y1="305.5" x2="893" y2="305.5" stroke="#ffffff" stroke-width="1"/>
<rect x="886.5" y="307.5" width="3" height="4" fill="none" stroke="#ffffff"/>
<line x1="884" y1="312.5" x2="893" y2="312.5" stroke="#ffffff" stroke-width="1"/>
<rect x="886.5" y="312.5" width="3" height="4" fill="none" stroke="#ffffff"/>
<line x1="884" y1="317.5" x2="893" y2="317.5" stroke="#ffffff" stroke-width="1"/>
<rect x="886.5" y="319.5" width="3" height="4" fill="none" stroke="#ffffff"/>
<line x1="884" y1="324.5" x2="893" y2="324.5" stroke="#ffffff" stroke-width="1"/>
<rect x="886.5" y="325.5" width="3" height="4" fill="none" stroke="#ffffff"/>
<line x1="884" y1="330.5" x2="893" y2="330.5" stroke="#ffffff" stroke-width="1"/>
<rect x="886.5" y="328.5" width="3" height="4" fill="none" stroke="#ffffff"/>
<line x1="884" y1="333.5" x2="893" y2="333.5" stroke="#ffffff" stroke-width="1"/>
<rect x="886.5" y="335.5" width="3" height="4" fill="none" stroke="#ffffff"/>
<line x1="884" y1="340.5" x2="893" y2="340.5" stroke="#ffffff" stroke-width="1"/>
<rect x="886.5" y="340.5" width="3" height="4" fill="none" stroke="#ffffff"/>
<line x1="884" y1="345.5" x2="893" y2="345.5" stroke="#ffffff" stroke-width="1"/>
<rect x="886.5" y="346.5" width="3" height="4" fill="none" stroke="#ffffff"/>
<line x1="884" y1="351.5" x2="893" y2="351.5" stroke="#ffffff" stroke-width="1"/>
<rect x="886.5" y="351.5" width="3" height="4" fill="none" stroke="#ffffff"/>
<line x1="884" y1="356.5" x2="893" y2="356.5" stroke="#ffffff" stroke-width="1"/>
<rect x="886.5" y="357.5" width="3" height="4" fill="none" stroke="#ffffff"/>
<line x1="884" y1="362.5" x2="893" y2="362.5" stroke="#ffffff" stroke-width="1"/>
<rect x="886.5" y="362.5" width="3" height="4" fill="none" stroke="#ffffff"/>
<line x1="884" y1="367.5" x2="893" y2="367.5" stroke="#ffffff" stroke-width="1"/>
<rect x="886.5" y="368.5" width="3" height="4" fill="none" stroke="#ffffff"/>
<line x1="884" y1="373.5" x2="893" y2="373.5" stroke="#ffffff" stroke-width="1"/>
<rect x="886.5" y="373.5" width="3" height="4" fill="none" stroke="#ffffff"/>
<line x1="884" y1="378.5" x2="893" y2="378.5" stroke="#ffffff" stroke-width="1"/>
<rect x="886.5" y="379.5" width="3" height="4" fill="none" stroke="#ffffff"/>
<line x1="884" y1="384.5" x2="893" y2="384.5" stroke="#ffffff" stroke-width="1"/>
<rect x="886.5" y="385.5" width="3" height="4" fill="none" stroke="#ffffff"/>
<line x1="884" y1="390.5" x2="893" y2="390.5" stroke="#ffffff" stroke-width="1"/>
<rect x="886.5" y="391.5" width="3" height="4" fill="none" stroke="#ffffff"/>
<line x1="884" y1="396.5" x2="893" y2="396.5" stroke="#ffffff" stroke-width="1"/>
<rect x="886.5" y="396.5" width="3" height="4" fill="none" stroke="#ffffff"/>
<line x1="884" y1="401.5" x2="893" y2="401.5" stroke="#ffffff" stroke-width="1"/>
<rect x="886.5" y="402.5" width="3" height="4" fill="none" stroke="#ffffff"/>
<line x1="884" y1="407.5" x2="893" y2="407.5" stroke="#ffffff" stroke-width="1"/>
<rect x="886.5" y="407.5" width="3" height="4" fill="none" stroke="#ffffff"/>
<line x1="884" y1="412.5" x2="893" y2="412.5" stroke="#ffffff" stroke-width="1"/>
<rect x="886.5" y="413.5" width="3" height="4" fill="none" stroke="#ffffff"/>
<line x1="884" y1="418.5" x2="893" y2="418.5" stroke="#ffffff" stroke-width="1"/>
<rect x="886.5" y="419.5" width="3" height="4" fill="none" stroke="#ffffff"/>
<line x1="884" y1="424.5" x2="893" y2="424.5" stroke="#ffffff" stroke-width="1"/>
<rect x="886.5" y="425.5" width="3" height="4" fill="none" stroke="#ffffff"/>
<line x1="884" y1="430.5" x2="893" y2="430.5" stroke="#ffffff" stroke-width="1"/>
<rect x="886.5" y="431.5" width="3" height="4" fill="none" stroke="#ffffff"/>
<line x1="884" y1="436.5" x2="893" y2="436.5" stroke="#ffffff" stroke-width="1"/>
<rect x="886.5" y="436.5" width="3" height="4" fill="none" stroke="#ffffff"/>
<line x1="884" y1="441.5" x2="893" y2="441.5" stroke="#ffffff" stroke-width="1"/>
<rect x="886.5" y="442.5" width="3" height="4" fill="none" stroke="#ffffff"/>
<line x1="884" y1="447.5" x2="893" y2="447.5" stroke="#ffffff" stroke-width="1"/>
<rect x="886.5" y="447.5" width="3" height="4" fill="none" stroke="#ffffff"/>
<line x1="884" y1="452.5" x2="893" y2="452.5" stroke="#ffffff" stroke-width="1"/>
<rect x="886.5" y="453.5" width="3" height="4" fill="none" stroke="#ffffff"/>
<line x1="884" y1="458.5" x2="893" y2="458.5" stroke="#ffffff" stroke-width="1"/>
<rect x="886.5" y="458.5" width="3" height="4" fill="none" stroke="#ffffff"/>
<line x1="884" y1="463.5" x2="893" y2="463.5" stroke="#ffffff" stroke-width="1"/>
<rect x="886.5" y="464.5" width="3" height="4" fill="none" stroke="#ffffff"/>
<line x1="884" y1="469.5" x2="893" y2="469.5" stroke="#ffffff" stroke-width="1"/>
<rect x="886.5" y="469.5" width="3" height="4" fill="none" stroke="#ffffff"/>
<line x1="884" y1="474.5" x2="893" y2="474.5" stroke="#ffffff" stroke-width="1"/>
<rect x="886.5" y="475.5" width="3" height="4" fill="none" stroke="#ffffff"/>
<line x1="884" y1="480.5" x2="893" y2="480.5" stroke="#ffffff" stroke-width="1"/>
<rect x="886.5" y="480.5" width="3" height="4" fill="none" stroke="#ffffff"/>
<line x1="884" y1="485.5" x2="893" y2="485.5" stroke="#ffffff" stroke-width="1"/>
<rect x="886.5" y="486.5" width="3" height="4" fill="none" stroke="#ffffff"/>
<line x1="884" y1="491.5" x2="893" y2="491.5" stroke="#ffffff" stroke-width="1"/>
<rect x="886.5" y="491.5" width="3" height="4" fill="none" stroke="#ffffff"/>
<line x1="884" y1="496.5" x2="893" y2="496.5" stroke="#ffffff" stroke-width="1"/>
<line x1="884" y1="299.5" x2="832" y2="306" stroke="#ffffff" stroke-width="1"/>
<line x1="884" y1="305.5" x2="745" y2="319" stroke="#ffffff" stroke-width="1"/>
<line x1="884" y1="312.5" x2="832" y2="323" stroke="#ffffff" stroke-width="1"/>
<line x1="884" y1="317.5" x2="832" y2="324" stroke="#ffffff" stroke-width="1"/>
<line x1="884" y1="324.5" x2="832" y2="333" stroke="#ffffff" stroke-width="1"/>
<line x1="884" y1="330.5" x2="745" y2="344" stroke="#ffffff" stroke-width="1"/>
<line x1="884" y1="333.5" x2="832" y2="340" stroke="#ffffff" stroke-width="1"/>
<line x1="884" y1="340.5" x2="832" y2="349" stroke="#ffffff" stroke-width="1"/>
<line x1="884" y1="345.5" x2="832" y2="356" stroke="#ffffff" stroke-width="1"/>
<line x1="884" y1="351.5" x2="745" y2="365" stroke="#ffffff" stroke-width="1"/>
<line x1="884" y1="356.5" x2="832" y2="365" stroke="#ffffff" stroke-width="1"/>
<line x1="884" y1="362.5" x2="832" y2="373" stroke="#ffffff" stroke-width="1"/>
<line x1="884" y1="367.5" x2="832" y2="374" stroke="#ffffff" stroke-width="1"/>
<line x1="884" y1="373.5" x2="745" y2="387" stroke="#ffffff" stroke-width="1"/>
<line x1="884" y1="378.5" x2="832" y2="389" stroke="#ffffff" stroke-width="1"/>
<line x1="884" y1="384.5" x2="832" y2="391" stroke="#ffffff" stroke-width="1"/>
<line x1="884" y1="390.5" x2="832" y2="399" stroke="#ffffff" stroke-width="1"/>
<line x1="884" y1="396.5" x2="745" y2="410" stroke="#ffffff" stroke-width="1"/>
<line x1="884" y1="401.5" x2="830" y2="413" stroke="#ffffff" stroke-width="1"/>
<line x1="884" y1="407.5" x2="830" y2="419" stroke="#ffffff" stroke-width="1"/>
<line x1="884" y1="412.5" x2="830" y2="424" stroke="#ffffff" stroke-width="1"/>
<line x1="884" y1="418.5" x2="830" y2="430" stroke="#ffffff" stroke-width="1"/>
<line x1="884" y1="424.5" x2="848" y2="442.48" stroke="#ffffff" stroke-width="1"/>
<line x1="884" y1="430.5" x2="848" y2="446.2" stroke="#ffffff" stroke-width="1"/>
<line x1="884" y1="436.5" x2="848" y2="449.92" stroke="#ffffff" stroke-width="1"/>
<line x1="884" y1="441.5" x2="848" y2="453.02" stroke="#ffffff" stroke-width="1"/>
<line x1="884" y1="447.5" x2="848" y2="456.74" stroke="#ffffff" stroke-width="1"/>
<line x1="884" y1="452.5" x2="848" y2="459.84" stroke="#ffffff" stroke-width="1"/>
<line x1="884" y1="458.5" x2="848" y2="463.56" stroke="#ffffff" stroke-width="1"/>
<line x1="884" y1="463.5" x2="848" y2="466.66" stroke="#ffffff" stroke-width="1"/>
<line x1="884" y1="469.5" x2="848" y2="470.38" stroke="#ffffff" stroke-width="1"/>
<line x1="884" y1="474.5" x2="848" y2="473.48" stroke="#ffffff" stroke-width="1"/>
<line x1="884" y1="480.5" x2="848" y2="477.2" stroke="#ffffff" stroke-width="1"/>
<line x1="884" y1="485.5" x2="848" y2="480.3" stroke="#ffffff" stroke-width="1"/>
<line x1="884" y1="491.5" x2="848" y2="484.02" stroke="#ffffff" stroke-width="1"/>
<line x1="884" y1="496.5" x2="848" y2="487.12" stroke="#ffffff" stroke-width="1"/>
<line x1="625.8" y1="541.5" x2="566" y2="493" stroke="#ffffff" stroke-width="1"/>
<line x1="658" y1="541.5" x2="570" y2="487" stroke="#ffffff" stroke-width="1"/>
<line x1="672.5" y1="541.5" x2="572" y2="485" stroke="#ffffff" stroke-width="1"/>
<line x1="690.4" y1="541.5" x2="572" y2="483" stroke="#ffffff" stroke-width="1"/>
<line x1="708.5" y1="541.5" x2="573" y2="481" stroke="#ffffff" stroke-width="1"/>
<line x1="728.6" y1="541.5" x2="680" y2="470" stroke="#ffffff" stroke-width="1"/>
<line x1="750.4" y1="541.5" x2="700" y2="474" stroke="#ffffff" stroke-width="1"/>
<line x1="776" y1="541.5" x2="762" y2="490" stroke="#ffffff" stroke-width="1"/>
<line x1="798" y1="541.5" x2="783" y2="494" stroke="#ffffff" stroke-width="1"/>
<line x1="837" y1="541.5" x2="812" y2="491" stroke="#ffffff" stroke-width="1"/>
<line x1="855" y1="541.5" x2="835" y2="491" stroke="#ffffff" stroke-width="1"/>
<line x1="875.4" y1="541.5" x2="849" y2="494" stroke="#ffffff" stroke-width="1"/>
<line x1="886.8" y1="541.5" x2="862" y2="494" stroke="#ffffff" stroke-width="1"/>
<rect x="628.3" y="536.5" width="3" height="4" fill="none" stroke="#ffffff"/>
<line x1="625.8" y1="541.5" x2="634.8" y2="541.5" stroke="#ffffff" stroke-width="1"/>
<rect x="660.5" y="536.5" width="3" height="4" fill="none" stroke="#ffffff"/>
<line x1="658" y1="541.5" x2="667" y2="541.5" stroke="#ffffff" stroke-width="1"/>
<rect x="675.0" y="536.5" width="3" height="4" fill="none" stroke="#ffffff"/>
<line x1="672.5" y1="541.5" x2="681.5" y2="541.5" stroke="#ffffff" stroke-width="1"/>
<rect x="692.9" y="536.5" width="3" height="4" fill="none" stroke="#ffffff"/>
<line x1="690.4" y1="541.5" x2="699.4" y2="541.5" stroke="#ffffff" stroke-width="1"/>
<rect x="711.0" y="536.5" width="3" height="4" fill="none" stroke="#ffffff"/>
<line x1="708.5" y1="541.5" x2="717.5" y2="541.5" stroke="#ffffff" stroke-width="1"/>
<rect x="731.1" y="536.5" width="3" height="4" fill="none" stroke="#ffffff"/>
<line x1="728.6" y1="541.5" x2="737.6" y2="541.5" stroke="#ffffff" stroke-width="1"/>
<rect x="752.9" y="536.5" width="3" height="4" fill="none" stroke="#ffffff"/>
<line x1="750.4" y1="541.5" x2="759.4" y2="541.5" stroke="#ffffff" stroke-width="1"/>
<rect x="778.5" y="536.5" width="3" height="4" fill="none" stroke="#ffffff"/>
<line x1="776" y1="541.5" x2="785" y2="541.5" stroke="#ffffff" stroke-width="1"/>
<rect x="800.5" y="536.5" width="3" height="4" fill="none" stroke="#ffffff"/>
<line x1="798" y1="541.5" x2="807" y2="541.5" stroke="#ffffff" stroke-width="1"/>
<rect x="839.5" y="536.5" width="3" height="4" fill="none" stroke="#ffffff"/>
<line x1="837" y1="541.5" x2="846" y2="541.5" stroke="#ffffff" stroke-width="1"/>
<rect x="857.5" y="536.5" width="3" height="4" fill="none" stroke="#ffffff"/>
<line x1="855" y1="541.5" x2="864" y2="541.5" stroke="#ffffff" stroke-width="1"/>
<rect x="877.9" y="536.5" width="3" height="4" fill="none" stroke="#ffffff"/>
<line x1="875.4" y1="541.5" x2="884.4" y2="541.5" stroke="#ffffff" stroke-width="1"/>
<rect x="889.3" y="536.5" width="3" height="4" fill="none" stroke="#ffffff"/>
<line x1="886.8" y1="541.5" x2="895.8" y2="541.5" stroke="#ffffff" stroke-width="1"/>
<line x1="492" y1="541.5" x2="560" y2="490" stroke="#ffffff" stroke-width="1"/>
<rect x="559" y="225" width="271" height="7" fill="url(#hw)"/>
<rect x="559.5" y="225.5" width="270" height="6" fill="none" stroke="#00ffff" stroke-width="1"/>
<rect x="559" y="231" width="7" height="48" fill="url(#hw)"/>
<rect x="559.5" y="231.5" width="6" height="47" fill="none" stroke="#00ffff" stroke-width="1"/>
<rect x="559" y="316" width="7" height="124" fill="url(#hw)"/>
<rect x="559.5" y="316.5" width="6" height="123" fill="none" stroke="#00ffff" stroke-width="1"/>
<rect x="559" y="494" width="7" height="36" fill="url(#hw)"/>
<rect x="559.5" y="494.5" width="6" height="35" fill="none" stroke="#00ffff" stroke-width="1"/>
<rect x="824" y="231" width="6" height="74" fill="url(#hw)"/>
<rect x="824.5" y="231.5" width="5" height="73" fill="none" stroke="#00ffff" stroke-width="1"/>
<rect x="824" y="318" width="6" height="14" fill="url(#hw)"/>
<rect x="824.5" y="318.5" width="5" height="13" fill="none" stroke="#00ffff" stroke-width="1"/>
<rect x="824" y="346" width="6" height="40" fill="url(#hw)"/>
<rect x="824.5" y="346.5" width="5" height="39" fill="none" stroke="#00ffff" stroke-width="1"/>
<rect x="824" y="405" width="6" height="20" fill="url(#hw)"/>
<rect x="824.5" y="405.5" width="5" height="19" fill="none" stroke="#00ffff" stroke-width="1"/>
<rect x="815" y="424" width="15" height="13" fill="url(#hw)"/>
<rect x="815.5" y="424.5" width="14" height="12" fill="none" stroke="#00ffff" stroke-width="1"/>
<rect x="815" y="492" width="15" height="38" fill="url(#hw)"/>
<rect x="815.5" y="492.5" width="14" height="37" fill="none" stroke="#00ffff" stroke-width="1"/>
<rect x="559" y="523" width="271" height="7" fill="url(#hw)"/>
<rect x="559.5" y="523.5" width="270" height="6" fill="none" stroke="#00ffff" stroke-width="1"/>
<rect x="743" y="231" width="7" height="91" fill="url(#hw)"/>
<rect x="743.5" y="231.5" width="6" height="90" fill="none" stroke="#00ffff" stroke-width="1"/>
<rect x="664" y="231" width="9" height="91" fill="url(#hw)"/>
<rect x="664.5" y="231.5" width="8" height="90" fill="none" stroke="#00ffff" stroke-width="1"/>
<rect x="664" y="439" width="9" height="91" fill="url(#hw)"/>
<rect x="664.5" y="439.5" width="8" height="90" fill="none" stroke="#00ffff" stroke-width="1"/>
<path d="M566.5 279 V237 Q566.5 231.5 572 231.5 H743" fill="none" stroke="#fff"/>
<path d="M750.5 231.5 H818 Q823.5 231.5 823.5 237 V295" fill="none" stroke="#fff"/>
<line x1="566" y1="522.5" x2="824" y2="522.5" stroke="#ffffff" stroke-width="1"/>
<line x1="823.5" y1="346" x2="823.5" y2="520" stroke="#ffffff" stroke-width="1"/>
<line x1="512" y1="298.5" x2="840" y2="298.5" stroke="#ff0000" stroke-width="1" stroke-dasharray="14 4 4 4"/>
<rect x="525" y="248" width="21" height="10" fill="url(#hs)"/>
<rect x="525.5" y="248.5" width="20" height="9" fill="none" stroke="#ffffff" stroke-width="1"/>
<line x1="525.5" y1="258" x2="525.5" y2="336" stroke="#ffffff" stroke-width="1"/>
<line x1="530.5" y1="258" x2="530.5" y2="280" stroke="#ffffff" stroke-width="1"/>
<line x1="544.5" y1="258" x2="544.5" y2="336" stroke="#ffffff" stroke-width="1"/>
<line x1="539.5" y1="316" x2="539.5" y2="336" stroke="#ffffff" stroke-width="1"/>
<rect x="525" y="336" width="21" height="12" fill="url(#hs)"/>
<rect x="525.5" y="336.5" width="20" height="11" fill="none" stroke="#ffffff" stroke-width="1"/>
<rect x="519" y="267" width="15" height="1" fill="#ff0000"/>
<rect x="519" y="327" width="15" height="1" fill="#ff0000"/>
<rect x="529" y="246" width="1" height="4" fill="#ff0000"/>
<rect x="529" y="346" width="1" height="4" fill="#ff0000"/>
<rect x="534" y="246" width="1" height="4" fill="#ff0000"/>
<rect x="534" y="346" width="1" height="4" fill="#ff0000"/>
<rect x="539" y="246" width="1" height="4" fill="#ff0000"/>
<rect x="539" y="346" width="1" height="4" fill="#ff0000"/>
<rect x="543" y="246" width="1" height="4" fill="#ff0000"/>
<rect x="543" y="346" width="1" height="4" fill="#ff0000"/>
<rect x="522" y="279" width="46" height="11" fill="url(#hc)"/>
<rect x="522" y="304" width="46" height="12" fill="url(#hc)"/>
<rect x="522.5" y="279.5" width="46" height="37" stroke="#ffffff" fill="none" stroke-width="1"/>
<line x1="568" y1="290.5" x2="566" y2="290.5" stroke="#ffffff" stroke-width="1"/>
<line x1="522" y1="304.5" x2="568" y2="304.5" stroke="#ffffff" stroke-width="1"/>
<rect x="527" y="285" width="11" height="5" fill="#000"/>
<rect x="544" y="285" width="9" height="5" fill="#000"/>
<rect x="527" y="307" width="11" height="5" fill="#000"/>
<rect x="544" y="307" width="9" height="5" fill="#000"/>
<line x1="530.5" y1="290" x2="530.5" y2="304" stroke="#ffffff" stroke-width="1"/>
<line x1="556.5" y1="290" x2="556.5" y2="304" stroke="#ffffff" stroke-width="1"/>
<rect x="545" y="293" width="8" height="8" fill="#000"/>
<rect x="534.5" y="288.5" width="8" height="17" stroke="#00ff00" fill="none" stroke-width="1"/>
<rect x="550.5" y="290.5" width="6" height="10" stroke="#00ff00" fill="none" stroke-width="1"/>
<line x1="538.5" y1="283" x2="538.5" y2="313" stroke="#00ff00" stroke-width="1"/>
<line x1="549.5" y1="283" x2="549.5" y2="313" stroke="#00ff00" stroke-width="1"/>
<line x1="559.5" y1="285" x2="559.5" y2="312" stroke="#00ff00" stroke-width="1"/>
<rect x="568" y="285" width="58" height="7" fill="url(#hs)"/>
<rect x="568" y="303" width="58" height="7" fill="url(#hs)"/>
<line x1="568" y1="285.5" x2="636" y2="285.5" stroke="#ffffff" stroke-width="1"/>
<line x1="568" y1="291.5" x2="636" y2="291.5" stroke="#ffffff" stroke-width="1"/>
<line x1="568" y1="303.5" x2="636" y2="303.5" stroke="#ffffff" stroke-width="1"/>
<line x1="568" y1="309.5" x2="636" y2="309.5" stroke="#ffffff" stroke-width="1"/>
<line x1="576.5" y1="291" x2="576.5" y2="303" stroke="#ffffff" stroke-width="1"/>
<line x1="602.5" y1="291" x2="602.5" y2="303" stroke="#ffffff" stroke-width="1"/>
<rect x="570" y="309" width="32" height="10" fill="url(#hs)"/>
<rect x="572" y="318" width="30" height="14" fill="url(#hg)"/>
<rect x="572.5" y="318.5" width="29" height="13" fill="none" stroke="#ffffff" stroke-width="1"/>
<line x1="570" y1="316.5" x2="600" y2="316.5" stroke="#ff0000" stroke-width="1"/>
<line x1="574" y1="321.5" x2="592" y2="321.5" stroke="#ff0000" stroke-width="1"/>
<rect x="626" y="280" width="10" height="33" fill="url(#hs)"/>
<rect x="626.5" y="280.5" width="9" height="32" fill="none" stroke="#ffffff" stroke-width="1"/>
<line x1="624" y1="280.5" x2="638" y2="280.5" stroke="#ff0000" stroke-width="1"/>
<line x1="624" y1="313.5" x2="638" y2="313.5" stroke="#ff0000" stroke-width="1"/>
<rect x="630" y="276" width="1" height="8" fill="#ff0000"/>
<rect x="630" y="310" width="1" height="8" fill="#ff0000"/>
<rect x="636" y="281" width="12" height="32" fill="url(#hc)"/>
<rect x="645" y="276" width="1" height="38" fill="#ff0000"/>
<rect x="648" y="280" width="16" height="34" fill="url(#hc)"/>
<rect x="650.5" y="286.5" width="10" height="24" stroke="#ffffff" fill="none" stroke-width="1"/>
<rect x="653.5" y="292.5" width="5" height="12" stroke="#00ff00" fill="none" stroke-width="1"/>
<rect x="666.5" y="292.5" width="5" height="12" stroke="#00ff00" fill="none" stroke-width="1"/>
<line x1="657.5" y1="285" x2="657.5" y2="313" stroke="#00ff00" stroke-width="1"/>
<line x1="677.5" y1="283" x2="677.5" y2="314" stroke="#00ff00" stroke-width="1"/>
<line x1="673" y1="283.5" x2="678" y2="283.5" stroke="#00ff00" stroke-width="1"/>
<line x1="673" y1="313.5" x2="678" y2="313.5" stroke="#00ff00" stroke-width="1"/>
<rect x="604" y="293" width="22" height="5" fill="#00ff00"/>
<rect x="606" y="294" width="3" height="2" fill="#000"/>
<rect x="612" y="294" width="3" height="2" fill="#000"/>
<rect x="618" y="294" width="3" height="2" fill="#000"/>
<line x1="626" y1="296" x2="650" y2="288" stroke="#00ff00" stroke-width="1"/>
<rect x="502" y="294" width="19" height="5" fill="#00ff00"/>
<rect x="504" y="295" width="3" height="2" fill="#000"/>
<rect x="510" y="295" width="3" height="2" fill="#000"/>
<rect x="516" y="295" width="3" height="2" fill="#000"/>
<line x1="521" y1="300" x2="540" y2="292" stroke="#00ff00" stroke-width="1"/>
<rect x="517.5" y="310.5" width="5" height="4" stroke="#00ff00" fill="none" stroke-width="1"/>
<line x1="520.5" y1="314" x2="520.5" y2="320" stroke="#00ff00" stroke-width="1"/>
<line x1="673" y1="292.5" x2="824" y2="292.5" stroke="#ffffff" stroke-width="1"/>
<line x1="673" y1="303.5" x2="824" y2="303.5" stroke="#ffffff" stroke-width="1"/>
<rect x="651" y="233" width="22" height="28" fill="url(#hc)"/>
<rect x="654" y="241" width="16" height="15" fill="#000"/>
<rect x="651.5" y="240.5" width="22" height="17" stroke="#ffffff" fill="none" stroke-width="1"/>
<circle cx="662" cy="248" r="6" fill="none" stroke="#fff"/>
<rect x="656.5" y="243.5" width="5" height="10" stroke="#00ff00" fill="none" stroke-width="1"/>
<rect x="664.5" y="243.5" width="5" height="10" stroke="#00ff00" fill="none" stroke-width="1"/>
<line x1="645" y1="246.5" x2="686" y2="246.5" stroke="#ff0000" stroke-width="1"/>
<line x1="660" y1="237.5" x2="684" y2="237.5" stroke="#00ff00" stroke-width="1"/>
<rect x="683.5" y="235.5" width="4" height="4" stroke="#00ff00" fill="none" stroke-width="1"/>
<line x1="670.5" y1="236" x2="670.5" y2="252" stroke="#00ff00" stroke-width="1"/>
<line x1="740" y1="251" x2="755" y2="251" stroke="#00ff00" stroke-width="1"/>
<rect x="754.5" y="248.5" width="3" height="4" stroke="#00ff00" fill="none" stroke-width="1"/>
<path d="M716 292 L722 287 L731 287 L739 292 L739 300 L733 306 L730 317 L722 317 L719 306 L716 300 Z" fill="none" stroke="#fff"/>
<rect x="721" y="291" width="11" height="10" fill="url(#hc)"/>
<rect x="726" y="287" width="1" height="32" fill="#ff0000"/>
<line x1="720" y1="309.5" x2="824" y2="309.5" stroke="#ffffff" stroke-width="1"/>
<line x1="720" y1="315.5" x2="824" y2="315.5" stroke="#ffffff" stroke-width="1"/>
<line x1="720" y1="312.5" x2="832" y2="312.5" stroke="#ff0000" stroke-width="1" stroke-dasharray="18 4 4 4"/>
<path d="M757 314 L754 319 L761 327 L768 319 L765 314" fill="none" stroke="#fff"/>
<rect x="761" y="312" width="1" height="17" fill="#ff0000"/>
<line x1="755" y1="326.5" x2="768" y2="326.5" stroke="#ff0000" stroke-width="1"/>
<rect x="759" y="314" width="4" height="2" fill="#ff00ff"/>
<rect x="812" y="305" width="20" height="16" fill="url(#hw)"/>
<rect x="812.5" y="305.5" width="19" height="15" fill="none" stroke="#ffffff" stroke-width="1"/>
<rect x="814.5" y="308.5" width="6" height="9" stroke="#00ff00" fill="none" stroke-width="1"/>
<rect x="819.5" y="307.5" width="9" height="12" stroke="#ffffff" fill="none" stroke-width="1"/>
<rect x="820" y="309" width="7" height="8" fill="#000"/>
<rect x="563.5" y="329.5" width="14" height="17" stroke="#00ff00" fill="none" stroke-width="1"/>
<rect x="566.5" y="332.5" width="7" height="11" stroke="#ffffff" fill="none" stroke-width="1"/>
<rect x="567.5" y="334.5" width="4" height="7" stroke="#00ff00" fill="none" stroke-width="1"/>
<line x1="566" y1="337.5" x2="830" y2="337.5" stroke="#ff0000" stroke-width="1" stroke-dasharray="14 4 4 4"/>
<line x1="566" y1="332.5" x2="824" y2="332.5" stroke="#ffffff" stroke-width="1"/>
<line x1="566" y1="343.5" x2="824" y2="343.5" stroke="#ffffff" stroke-width="1"/>
<rect x="592" y="334" width="18" height="5" fill="#00ff00"/>
<rect x="594" y="335" width="3" height="2" fill="#000"/>
<rect x="600" y="335" width="3" height="2" fill="#000"/>
<rect x="606" y="335" width="3" height="2" fill="#000"/>
<rect x="572" y="343" width="30" height="14" fill="url(#hg)"/>
<rect x="572.5" y="343.5" width="29" height="13" fill="none" stroke="#ffffff" stroke-width="1"/>
<rect x="582" y="357" width="18" height="8" fill="url(#hg)"/>
<rect x="582.5" y="357.5" width="17" height="7" fill="none" stroke="#ffffff" stroke-width="1"/>
<line x1="570" y1="357.5" x2="600" y2="357.5" stroke="#ff0000" stroke-width="1"/>
<line x1="578" y1="365.5" x2="600" y2="365.5" stroke="#ff0000" stroke-width="1"/>
<rect x="652" y="320" width="10" height="12" fill="url(#hg)"/>
<rect x="652.5" y="320.5" width="9" height="11" fill="none" stroke="#ffffff" stroke-width="1"/>
<rect x="652" y="343" width="10" height="13" fill="url(#hg)"/>
<rect x="652.5" y="343.5" width="9" height="12" fill="none" stroke="#ffffff" stroke-width="1"/>
<line x1="650" y1="356.5" x2="664" y2="356.5" stroke="#ff0000" stroke-width="1"/>
<line x1="650" y1="320.5" x2="664" y2="320.5" stroke="#ff0000" stroke-width="1"/>
<rect x="681" y="307" width="12" height="25" fill="url(#hg)"/>
<rect x="681.5" y="307.5" width="11" height="24" fill="none" stroke="#ffffff" stroke-width="1"/>
<rect x="681" y="343" width="12" height="46" fill="url(#hg)"/>
<rect x="681.5" y="343.5" width="11" height="45" fill="none" stroke="#ffffff" stroke-width="1"/>
<rect x="681" y="403" width="12" height="23" fill="url(#hg)"/>
<rect x="681.5" y="403.5" width="11" height="22" fill="none" stroke="#ffffff" stroke-width="1"/>
<line x1="678" y1="426.5" x2="696" y2="426.5" stroke="#ff0000" stroke-width="1"/>
<line x1="681" y1="366.5" x2="693" y2="366.5" stroke="#ff00ff" stroke-width="1"/>
<rect x="692" y="320" width="14" height="12" fill="url(#hg)"/>
<rect x="692.5" y="320.5" width="13" height="11" fill="none" stroke="#ffffff" stroke-width="1"/>
<line x1="690" y1="320.5" x2="706" y2="320.5" stroke="#ff0000" stroke-width="1"/>
<rect x="693.5" y="343.5" width="13" height="9" stroke="#ffffff" fill="none" stroke-width="1"/>
<rect x="700" y="336" width="16" height="5" fill="#00ff00"/>
<rect x="702" y="337" width="3" height="2" fill="#000"/>
<rect x="708" y="337" width="3" height="2" fill="#000"/>
<line x1="691" y1="326" x2="700" y2="339" stroke="#00ff00" stroke-width="1"/>
<line x1="706" y1="347.5" x2="824" y2="347.5" stroke="#ffffff" stroke-width="1"/>
<line x1="706" y1="352.5" x2="824" y2="352.5" stroke="#ffffff" stroke-width="1"/>
<rect x="693" y="385" width="26" height="4" fill="url(#hg)"/>
<rect x="693" y="403" width="26" height="6" fill="url(#hg)"/>
<line x1="693" y1="384.5" x2="719" y2="384.5" stroke="#ffffff" stroke-width="1"/>
<line x1="693" y1="409.5" x2="719" y2="409.5" stroke="#ffffff" stroke-width="1"/>
<rect x="719" y="352" width="11" height="37" fill="url(#hg)"/>
<rect x="719.5" y="352.5" width="10" height="36" fill="none" stroke="#ffffff" stroke-width="1"/>
<rect x="719" y="403" width="11" height="36" fill="url(#hg)"/>
<rect x="719.5" y="403.5" width="10" height="35" fill="none" stroke="#ffffff" stroke-width="1"/>
<line x1="716" y1="438.5" x2="733" y2="438.5" stroke="#ff0000" stroke-width="1"/>
<line x1="716" y1="352.5" x2="733" y2="352.5" stroke="#ff0000" stroke-width="1"/>
<rect x="740" y="350" width="12" height="39" fill="url(#hg)"/>
<rect x="740.5" y="350.5" width="11" height="38" fill="none" stroke="#ffffff" stroke-width="1"/>
<rect x="740" y="403" width="12" height="40" fill="url(#hg)"/>
<rect x="740.5" y="403.5" width="11" height="39" fill="none" stroke="#ffffff" stroke-width="1"/>
<line x1="737" y1="350.5" x2="755" y2="350.5" stroke="#ff0000" stroke-width="1"/>
<rect x="752" y="383" width="13" height="6" fill="url(#hg)"/>
<rect x="752.5" y="383.5" width="12" height="5" fill="none" stroke="#ffffff" stroke-width="1"/>
<rect x="752" y="403" width="13" height="7" fill="url(#hg)"/>
<rect x="752.5" y="403.5" width="12" height="6" fill="none" stroke="#ffffff" stroke-width="1"/>
<rect x="760" y="394" width="18" height="5" fill="#00ff00"/>
<rect x="762" y="395" width="3" height="2" fill="#000"/>
<rect x="768" y="395" width="3" height="2" fill="#000"/>
<rect x="774" y="395" width="3" height="2" fill="#000"/>
<line x1="748" y1="385" x2="760" y2="397" stroke="#00ff00" stroke-width="1"/>
<line x1="764.5" y1="389" x2="764.5" y2="403" stroke="#ffffff" stroke-width="1"/>
<line x1="765" y1="389.5" x2="824" y2="389.5" stroke="#ffffff" stroke-width="1"/>
<line x1="765" y1="403.5" x2="824" y2="403.5" stroke="#ffffff" stroke-width="1"/>
<line x1="566" y1="396.5" x2="830" y2="396.5" stroke="#ff0000" stroke-width="1" stroke-dasharray="14 4 4 4"/>
<line x1="566" y1="389.5" x2="681" y2="389.5" stroke="#ffffff" stroke-width="1"/>
<line x1="566" y1="403.5" x2="681" y2="403.5" stroke="#ffffff" stroke-width="1"/>
<rect x="563.5" y="386.5" width="13" height="19" stroke="#00ff00" fill="none" stroke-width="1"/>
<rect x="565.5" y="390.5" width="7" height="12" stroke="#ffffff" fill="none" stroke-width="1"/>
<rect x="566.5" y="392.5" width="4" height="8" stroke="#00ff00" fill="none" stroke-width="1"/>
<rect x="701" y="397" width="16" height="5" fill="#00ff00"/>
<rect x="703" y="398" width="3" height="2" fill="#000"/>
<rect x="709" y="398" width="3" height="2" fill="#000"/>
<line x1="690" y1="386" x2="702" y2="399" stroke="#00ff00" stroke-width="1"/>
<path d="M740 442 H790 V409 H778 V443 H752 V442" fill="none" stroke="#fff"/>
<rect x="740" y="443" width="50" height="10" fill="url(#hg)"/>
<rect x="740.5" y="443.5" width="49" height="9" fill="none" stroke="#ffffff" stroke-width="1"/>
<rect x="778" y="409" width="12" height="34" fill="url(#hg)"/>
<rect x="778.5" y="409.5" width="11" height="33" fill="none" stroke="#ffffff" stroke-width="1"/>
<line x1="775" y1="409.5" x2="793" y2="409.5" stroke="#ff0000" stroke-width="1"/>
<rect x="816.5" y="329.5" width="21" height="17" stroke="#00ff00" fill="none" stroke-width="1"/>
<rect x="821.5" y="332.5" width="8" height="11" stroke="#ffffff" fill="none" stroke-width="1"/>
<line x1="830.5" y1="329" x2="830.5" y2="346" stroke="#00ff00" stroke-width="1"/>
<rect x="816.5" y="387.5" width="21" height="18" stroke="#00ff00" fill="none" stroke-width="1"/>
<rect x="821.5" y="390.5" width="8" height="12" stroke="#ffffff" fill="none" stroke-width="1"/>
<line x1="830.5" y1="387" x2="830.5" y2="405" stroke="#00ff00" stroke-width="1"/>
<line x1="752" y1="420.5" x2="824" y2="420.5" stroke="#ffffff" stroke-width="1"/>
<line x1="752" y1="356.5" x2="824" y2="356.5" stroke="#ffffff" stroke-width="1"/>
<line x1="536" y1="464.5" x2="866" y2="464.5" stroke="#ff0000" stroke-width="1" stroke-dasharray="16 5 4 5"/>
<line x1="548" y1="457.5" x2="862" y2="457.5" stroke="#ff00ff" stroke-width="1" stroke-dasharray="6 4"/>
<line x1="548" y1="471.5" x2="862" y2="471.5" stroke="#ff00ff" stroke-width="1" stroke-dasharray="6 4"/>
<line x1="552" y1="452.5" x2="790" y2="452.5" stroke="#ffffff" stroke-width="1"/>
<line x1="552" y1="476.5" x2="790" y2="476.5" stroke="#ffffff" stroke-width="1"/>
<rect x="540.5" y="451.5" width="12" height="26" stroke="#ffffff" fill="none" stroke-width="1"/>
<line x1="546.5" y1="451" x2="546.5" y2="477" stroke="#ffffff" stroke-width="1"/>
<rect x="554" y="440" width="19" height="12" fill="url(#hw)"/>
<rect x="554.5" y="440.5" width="18" height="11" fill="none" stroke="#00ffff" stroke-width="1"/>
<rect x="554" y="477" width="19" height="18" fill="url(#hw)"/>
<rect x="554.5" y="477.5" width="18" height="17" fill="none" stroke="#00ffff" stroke-width="1"/>
<rect x="560.5" y="446.5" width="11" height="36" stroke="#00ff00" fill="none" stroke-width="1"/>
<rect x="556.5" y="458.5" width="4" height="8" stroke="#00ff00" fill="none" stroke-width="1"/>
<rect x="568.5" y="458.5" width="4" height="8" stroke="#00ff00" fill="none" stroke-width="1"/>
<rect x="671.5" y="445.5" width="7" height="38" stroke="#00ff00" fill="none" stroke-width="1"/>
<rect x="666.5" y="458.5" width="4" height="8" stroke="#00ff00" fill="none" stroke-width="1"/>
<rect x="740" y="478" width="50" height="10" fill="url(#hg)"/>
<rect x="740.5" y="478.5" width="49" height="9" fill="none" stroke="#ffffff" stroke-width="1"/>
<rect x="740" y="487" width="12" height="4" fill="url(#hg)"/>
<rect x="740.5" y="487.5" width="11" height="3" fill="none" stroke="#ffffff" stroke-width="1"/>
<rect x="778" y="487" width="12" height="34" fill="url(#hg)"/>
<rect x="778.5" y="487.5" width="11" height="33" fill="none" stroke="#ffffff" stroke-width="1"/>
<line x1="774" y1="521.5" x2="794" y2="521.5" stroke="#ff0000" stroke-width="1"/>
<rect x="800" y="437" width="38" height="12" fill="url(#hw)"/>
<rect x="800.5" y="437.5" width="37" height="11" fill="none" stroke="#ffffff" stroke-width="1"/>
<rect x="791" y="479" width="47" height="13" fill="url(#hw)"/>
<rect x="791.5" y="479.5" width="46" height="12" fill="none" stroke="#ffffff" stroke-width="1"/>
<rect x="838" y="432" width="22" height="15" fill="url(#hw)"/>
<rect x="838" y="481" width="22" height="10" fill="url(#hw)"/>
<rect x="790.5" y="449.5" width="70" height="30" stroke="#ffffff" fill="none" stroke-width="1"/>
<line x1="796.5" y1="449" x2="796.5" y2="479" stroke="#ffffff" stroke-width="1"/>
<line x1="800.5" y1="449" x2="800.5" y2="479" stroke="#ffffff" stroke-width="1"/>
<line x1="815.5" y1="449" x2="815.5" y2="479" stroke="#ffffff" stroke-width="1"/>
<line x1="818.5" y1="449" x2="818.5" y2="479" stroke="#ffffff" stroke-width="1"/>
<line x1="830.5" y1="449" x2="830.5" y2="479" stroke="#ffffff" stroke-width="1"/>
<line x1="838.5" y1="449" x2="838.5" y2="479" stroke="#ffffff" stroke-width="1"/>
<line x1="846.5" y1="449" x2="846.5" y2="479" stroke="#ffffff" stroke-width="1"/>
<line x1="853.5" y1="449" x2="853.5" y2="479" stroke="#ffffff" stroke-width="1"/>
<circle cx="801" cy="442" r="2" fill="#000" stroke="#ff0000"/>
<circle cx="811" cy="442" r="2" fill="#000" stroke="#ff0000"/>
<circle cx="801" cy="485" r="2" fill="#000" stroke="#ff0000"/>
<circle cx="811" cy="485" r="2" fill="#000" stroke="#ff0000"/>
<circle cx="828" cy="442" r="2" fill="#000" stroke="#ff0000"/>
<circle cx="828" cy="485" r="2" fill="#000" stroke="#ff0000"/>
<rect x="806" y="436" width="1" height="16" fill="#ff0000"/>
<rect x="806" y="477" width="1" height="16" fill="#ff0000"/>
<line x1="840" y1="437.5" x2="860" y2="437.5" stroke="#ff0000" stroke-width="1" stroke-dasharray="4 2"/>
<line x1="840" y1="489.5" x2="860" y2="489.5" stroke="#ff0000" stroke-width="1" stroke-dasharray="4 2"/>
<rect x="815.5" y="453.5" width="8" height="22" stroke="#ff00ff" fill="none" stroke-width="1"/>
<rect x="808.5" y="457.5" width="4" height="8" stroke="#00ff00" fill="none" stroke-width="1"/>
<rect x="829.5" y="457.5" width="4" height="8" stroke="#00ff00" fill="none" stroke-width="1"/>
<line x1="811.5" y1="452" x2="811.5" y2="480" stroke="#00ff00" stroke-width="1"/>
<line x1="832.5" y1="450" x2="832.5" y2="492" stroke="#00ff00" stroke-width="1"/>
<line x1="842" y1="455" x2="877" y2="501" stroke="#00ff00" stroke-width="1"/>
<rect x="877.5" y="497.5" width="12" height="4" stroke="#00ff00" fill="none" stroke-width="1"/>
<line x1="540.5" y1="476" x2="540.5" y2="568" stroke="#00ff00" stroke-width="1"/>
<line x1="540" y1="567.5" x2="860" y2="567.5" stroke="#00ff00" stroke-width="1"/>
<line x1="859.5" y1="470" x2="859.5" y2="568" stroke="#00ff00" stroke-width="1"/>
<line x1="559.5" y1="529" x2="559.5" y2="562" stroke="#00ff00" stroke-width="1"/>
<line x1="559" y1="561.5" x2="830" y2="561.5" stroke="#00ff00" stroke-width="1"/>
<line x1="829.5" y1="492" x2="829.5" y2="562" stroke="#00ff00" stroke-width="1"/>
<line x1="566.5" y1="512" x2="566.5" y2="556" stroke="#00ff00" stroke-width="1"/>
<line x1="556" y1="555.5" x2="577" y2="555.5" stroke="#00ff00" stroke-width="1"/>
<rect x="564.5" y="551.5" width="4" height="4" stroke="#00ff00" fill="none" stroke-width="1"/>
<line x1="664.5" y1="512" x2="664.5" y2="551" stroke="#00ff00" stroke-width="1"/>
<line x1="672.5" y1="512" x2="672.5" y2="551" stroke="#00ff00" stroke-width="1"/>
<line x1="664" y1="550.5" x2="673" y2="550.5" stroke="#00ff00" stroke-width="1"/>
<rect x="666.5" y="546.5" width="4" height="4" stroke="#00ff00" fill="none" stroke-width="1"/>
<line x1="814.5" y1="452" x2="814.5" y2="551" stroke="#00ff00" stroke-width="1"/>
<line x1="814" y1="550.5" x2="830" y2="550.5" stroke="#00ff00" stroke-width="1"/>
<rect x="818.5" y="546.5" width="4" height="4" stroke="#00ff00" fill="none" stroke-width="1"/>
<rect x="691.5" y="558.5" width="4" height="3" stroke="#00ff00" fill="none" stroke-width="1"/>
<rect x="703.5" y="564.5" width="4" height="3" stroke="#00ff00" fill="none" stroke-width="1"/>
<rect x="942.5" y="200.5" width="103.5" height="99" rx="3" fill="none" stroke="#fff"/>
<line x1="936.5" y1="200" x2="936.5" y2="300" stroke="#00ff00" stroke-width="1"/>
<line x1="933" y1="200.5" x2="942" y2="200.5" stroke="#00ff00" stroke-width="1"/>
<line x1="933" y1="299.5" x2="942" y2="299.5" stroke="#00ff00" stroke-width="1"/>
<rect x="932.5" y="248.5" width="4" height="4" stroke="#00ff00" fill="none" stroke-width="1"/>
<line x1="942" y1="303.5" x2="1046" y2="303.5" stroke="#00ff00" stroke-width="1"/>
<line x1="942.5" y1="299" x2="942.5" y2="307" stroke="#00ff00" stroke-width="1"/>
<line x1="1046.5" y1="299" x2="1046.5" y2="307" stroke="#00ff00" stroke-width="1"/>
<rect x="992.5" y="300.5" width="4" height="3" stroke="#00ff00" fill="none" stroke-width="1"/>
<rect x="987.5" y="192.5" width="4" height="4" stroke="#00ff00" fill="none" stroke-width="1"/>
<rect x="973.5" y="311.5" width="35" height="4" stroke="#00ff00" fill="none" stroke-width="1"/>
<circle cx="971" cy="270" r="24" fill="none" stroke="#fff"/>
<circle cx="971" cy="270" r="16" fill="none" stroke="#ff0000" stroke-dasharray="5 3"/>
<circle cx="971" cy="270" r="13.5" fill="none" stroke="#ff00ff" stroke-width="2" stroke-dasharray="3 2"/>
<circle cx="971" cy="270" r="10.5" fill="none" stroke="#00ffff" stroke-width="1.5"/>
<circle cx="971" cy="270" r="8" fill="none" stroke="#fff"/>
<circle cx="971" cy="270" r="5" fill="none" stroke="#fff" stroke-dasharray="1 1"/>
<line x1="944" y1="270.5" x2="998" y2="270.5" stroke="#ff0000" stroke-width="1"/>
<line x1="971.5" y1="243" x2="971.5" y2="298" stroke="#ff0000" stroke-width="1"/>
<circle cx="971" cy="255" r="2" fill="#000" stroke="#fff"/>
<circle cx="971" cy="285" r="2" fill="#000" stroke="#fff"/>
<circle cx="956" cy="270" r="2" fill="#000" stroke="#fff"/>
<path d="M994 267 L1007 260 A8 8 0 1 1 1019 273 L991 288" fill="none" stroke="#fff"/>
<circle cx="1013.5" cy="266.5" r="4" fill="none" stroke="#fff"/>
<line x1="1002" y1="266.5" x2="1024" y2="266.5" stroke="#ff0000" stroke-width="1"/>
<line x1="1013.5" y1="256" x2="1013.5" y2="277" stroke="#ff0000" stroke-width="1"/>
<line x1="990" y1="281" x2="1012" y2="268" stroke="#ff0000" stroke-width="1"/>
<path d="M986 264 L993 268 L989 280 L984 278 Z" fill="#ff00ff" opacity="0.45"/>
<rect x="983" y="262" width="2" height="2" fill="#ff00ff"/>
<rect x="990" y="273" width="2" height="2" fill="#ff00ff"/>
<rect x="985" y="284" width="2" height="2" fill="#ff00ff"/>
<rect x="978" y="286" width="2" height="2" fill="#ff00ff"/>
<rect x="962" y="258" width="2" height="2" fill="#ff00ff"/>
<rect x="961" y="282" width="2" height="2" fill="#ff00ff"/>
<rect x="986.5" y="263.5" width="4" height="3" stroke="#00ff00" fill="none" stroke-width="1"/>
<rect x="986.5" y="281.5" width="4" height="3" stroke="#00ff00" fill="none" stroke-width="1"/>
<rect x="1015.5" y="267.5" width="4" height="3" stroke="#00ff00" fill="none" stroke-width="1"/>
<rect x="964.5" y="267.5" width="4" height="3" stroke="#00ff00" fill="none" stroke-width="1"/>
<circle cx="1013" cy="231" r="12" fill="none" stroke="#fff" stroke-width="1.6"/>
<circle cx="1013" cy="231" r="10" fill="none" stroke="#ff0000" stroke-dasharray="3 2"/>
<circle cx="1013" cy="231" r="6.5" fill="none" stroke="#fff"/>
<circle cx="1013" cy="231" r="4" fill="none" stroke="#fff"/>
<line x1="1000" y1="231.5" x2="1026" y2="231.5" stroke="#ff0000" stroke-width="1"/>
<line x1="1013.5" y1="219" x2="1013.5" y2="244" stroke="#ff0000" stroke-width="1"/>
<rect x="1011" y="232" width="3" height="4" fill="#00ff00"/>
<rect x="1011" y="218" width="4" height="3" fill="#ffffff"/>
<rect x="911" y="333" width="30" height="12" fill="url(#gbar)"/>
<rect x="929" y="329" width="4" height="4" fill="url(#gbar)"/>
<rect x="931" y="333" width="14" height="2" fill="#00ff00"/>
<rect x="941" y="333" width="8" height="6" fill="url(#gbar)"/>
<rect x="945" y="336" width="4" height="6" fill="url(#gbar)"/>
<rect x="911" y="333" width="3" height="52" fill="#00ff00"/>
<rect x="911" y="345" width="72" height="4" fill="url(#gbar)"/>
<rect x="911" y="348" width="24" height="31" fill="url(#gbar)"/>
<rect x="936" y="353" width="47" height="5" fill="url(#gbar)"/>
<rect x="936" y="365" width="47" height="5" fill="url(#gbar)"/>
<rect x="936" y="374" width="47" height="5" fill="url(#gbar)"/>
<rect x="936" y="362" width="10" height="7" fill="#00ff00"/>
<rect x="911" y="379" width="6" height="6" fill="url(#gbar)"/>
<rect x="994" y="333" width="16" height="12" fill="url(#gbar)"/>
<rect x="1000" y="329" width="12" height="4" fill="url(#gbar)"/>
<rect x="1007" y="345" width="14" height="4" fill="url(#gbar)"/>
<rect x="1016" y="333" width="8" height="3" fill="#00ff00"/>
<rect x="1023" y="341" width="9" height="4" fill="#00ff00"/>
<rect x="1032" y="341" width="2" height="3" fill="#00ff00"/>
<rect x="1016" y="336" width="6" height="8" fill="url(#gbar)"/>
<rect x="897" y="402" width="5" height="3" fill="#ffffff"/>
<rect x="899" y="403" width="1" height="1" fill="#000"/>
<rect x="954" y="406" width="6" height="3" fill="#ffffff"/>
<rect x="955" y="407" width="3" height="1" fill="#000"/>
<rect x="897" y="406" width="5" height="3" fill="#ffffff"/>
<rect x="899" y="407" width="1" height="1" fill="#000"/>
<rect x="902" y="410" width="9" height="3" fill="#ffffff"/>
<rect x="903" y="411" width="7" height="1" fill="#000"/>
<rect x="954" y="410" width="6" height="3" fill="#ffffff"/>
<rect x="955" y="411" width="3" height="1" fill="#000"/>
<rect x="897" y="410" width="5" height="3" fill="#ffffff"/>
<rect x="899" y="411" width="1" height="1" fill="#000"/>
<rect x="902" y="414" width="10" height="3" fill="#ffffff"/>
<rect x="903" y="415" width="8" height="1" fill="#000"/>
<rect x="954" y="414" width="4" height="3" fill="#ffffff"/>
<rect x="955" y="415" width="1" height="1" fill="#000"/>
<rect x="897" y="414" width="5" height="3" fill="#ffffff"/>
<rect x="899" y="415" width="1" height="1" fill="#000"/>
<rect x="902" y="418" width="15" height="3" fill="#ffffff"/>
<rect x="903" y="419" width="13" height="1" fill="#000"/>
<rect x="926" y="418" width="3" height="3" fill="#ffffff"/>
<rect x="927" y="419" width="1" height="1" fill="#000"/>
<rect x="954" y="418" width="6" height="3" fill="#ffffff"/>
<rect x="955" y="419" width="3" height="1" fill="#000"/>
<rect x="988" y="418" width="4" height="3" fill="#ffffff"/>
<rect x="989" y="419" width="2" height="1" fill="#000"/>
<rect x="897" y="418" width="5" height="3" fill="#ffffff"/>
<rect x="899" y="419" width="1" height="1" fill="#000"/>
<rect x="926" y="422" width="4" height="3" fill="#ffffff"/>
<rect x="927" y="423" width="2" height="1" fill="#000"/>
<rect x="988" y="422" width="5" height="3" fill="#ffffff"/>
<rect x="989" y="423" width="3" height="1" fill="#000"/>
<rect x="897" y="422" width="5" height="3" fill="#ffffff"/>
<rect x="899" y="423" width="1" height="1" fill="#000"/>
<rect x="902" y="426" width="12" height="3" fill="#ffffff"/>
<rect x="903" y="427" width="10" height="1" fill="#000"/>
<rect x="926" y="426" width="13" height="3" fill="#ffffff"/>
<rect x="927" y="427" width="11" height="1" fill="#000"/>
<rect x="954" y="426" width="4" height="3" fill="#ffffff"/>
<rect x="955" y="427" width="1" height="1" fill="#000"/>
<rect x="897" y="426" width="5" height="3" fill="#ffffff"/>
<rect x="899" y="427" width="1" height="1" fill="#000"/>
<rect x="926" y="430" width="5" height="2" fill="#ffffff"/>
<rect x="927" y="431" width="3" height="1" fill="#000"/>
<rect x="954" y="430" width="4" height="2" fill="#ffffff"/>
<rect x="955" y="431" width="1" height="1" fill="#000"/>
<rect x="988" y="430" width="6" height="2" fill="#ffffff"/>
<rect x="989" y="431" width="4" height="1" fill="#000"/>
<rect x="897" y="430" width="5" height="2" fill="#ffffff"/>
<rect x="899" y="431" width="1" height="1" fill="#000"/>
<rect x="902" y="433" width="9" height="3" fill="#ffffff"/>
<rect x="903" y="434" width="7" height="1" fill="#000"/>
<rect x="988" y="433" width="6" height="3" fill="#ffffff"/>
<rect x="989" y="434" width="4" height="1" fill="#000"/>
<rect x="897" y="433" width="5" height="3" fill="#ffffff"/>
<rect x="899" y="434" width="1" height="1" fill="#000"/>
<rect x="926" y="437" width="15" height="3" fill="#ffffff"/>
<rect x="927" y="438" width="13" height="1" fill="#000"/>
<rect x="954" y="437" width="6" height="3" fill="#ffffff"/>
<rect x="955" y="438" width="3" height="1" fill="#000"/>
<rect x="897" y="437" width="5" height="3" fill="#ffffff"/>
<rect x="899" y="438" width="1" height="1" fill="#000"/>
<rect x="902" y="441" width="9" height="3" fill="#ffffff"/>
<rect x="903" y="442" width="7" height="1" fill="#000"/>
<rect x="954" y="441" width="6" height="3" fill="#ffffff"/>
<rect x="955" y="442" width="3" height="1" fill="#000"/>
<rect x="988" y="441" width="7" height="3" fill="#ffffff"/>
<rect x="989" y="442" width="5" height="1" fill="#000"/>
<rect x="897" y="441" width="5" height="3" fill="#ffffff"/>
<rect x="899" y="442" width="1" height="1" fill="#000"/>
<rect x="902" y="445" width="9" height="3" fill="#ffffff"/>
<rect x="903" y="446" width="7" height="1" fill="#000"/>
<rect x="926" y="445" width="12" height="3" fill="#ffffff"/>
<rect x="927" y="446" width="10" height="1" fill="#000"/>
<rect x="897" y="445" width="5" height="3" fill="#ffffff"/>
<rect x="899" y="446" width="1" height="1" fill="#000"/>
<rect x="902" y="449" width="12" height="3" fill="#ffffff"/>
<rect x="903" y="450" width="10" height="1" fill="#000"/>
<rect x="988" y="449" width="6" height="3" fill="#ffffff"/>
<rect x="989" y="450" width="4" height="1" fill="#000"/>
<rect x="897" y="449" width="5" height="3" fill="#ffffff"/>
<rect x="899" y="450" width="1" height="1" fill="#000"/>
<rect x="926" y="453" width="6" height="3" fill="#ffffff"/>
<rect x="927" y="454" width="4" height="1" fill="#000"/>
<rect x="954" y="453" width="5" height="3" fill="#ffffff"/>
<rect x="955" y="454" width="2" height="1" fill="#000"/>
<rect x="897" y="453" width="5" height="3" fill="#ffffff"/>
<rect x="899" y="454" width="1" height="1" fill="#000"/>
<rect x="902" y="457" width="10" height="3" fill="#ffffff"/>
<rect x="903" y="458" width="8" height="1" fill="#000"/>
<rect x="926" y="457" width="7" height="3" fill="#ffffff"/>
<rect x="927" y="458" width="5" height="1" fill="#000"/>
<rect x="897" y="457" width="5" height="3" fill="#ffffff"/>
<rect x="899" y="458" width="1" height="1" fill="#000"/>
<rect x="902" y="461" width="17" height="3" fill="#ffffff"/>
<rect x="903" y="462" width="15" height="1" fill="#000"/>
<rect x="926" y="461" width="8" height="3" fill="#ffffff"/>
<rect x="927" y="462" width="6" height="1" fill="#000"/>
<rect x="954" y="461" width="4" height="3" fill="#ffffff"/>
<rect x="955" y="462" width="1" height="1" fill="#000"/>
<rect x="897" y="461" width="5" height="3" fill="#ffffff"/>
<rect x="899" y="462" width="1" height="1" fill="#000"/>
<rect x="954" y="465" width="6" height="3" fill="#ffffff"/>
<rect x="955" y="466" width="3" height="1" fill="#000"/>
<rect x="988" y="465" width="4" height="3" fill="#ffffff"/>
<rect x="989" y="466" width="2" height="1" fill="#000"/>
<rect x="897" y="465" width="5" height="3" fill="#ffffff"/>
<rect x="899" y="466" width="1" height="1" fill="#000"/>
<rect x="902" y="469" width="17" height="3" fill="#ffffff"/>
<rect x="903" y="470" width="15" height="1" fill="#000"/>
<rect x="954" y="469" width="5" height="3" fill="#ffffff"/>
<rect x="955" y="470" width="2" height="1" fill="#000"/>
<rect x="897" y="469" width="5" height="3" fill="#ffffff"/>
<rect x="899" y="470" width="1" height="1" fill="#000"/>
<rect x="902" y="473" width="22" height="3" fill="#ffffff"/>
<rect x="903" y="474" width="12" height="1" fill="#000"/>
<rect x="916" y="474" width="7" height="1" fill="#000"/>
<rect x="926" y="473" width="8" height="3" fill="#ffffff"/>
<rect x="927" y="474" width="6" height="1" fill="#000"/>
<rect x="954" y="473" width="6" height="3" fill="#ffffff"/>
<rect x="955" y="474" width="3" height="1" fill="#000"/>
<rect x="988" y="473" width="5" height="3" fill="#ffffff"/>
<rect x="989" y="474" width="3" height="1" fill="#000"/>
<rect x="897" y="473" width="5" height="3" fill="#ffffff"/>
<rect x="899" y="474" width="1" height="1" fill="#000"/>
<rect x="902" y="477" width="11" height="3" fill="#ffffff"/>
<rect x="903" y="478" width="9" height="1" fill="#000"/>
<rect x="988" y="477" width="7" height="3" fill="#ffffff"/>
<rect x="989" y="478" width="5" height="1" fill="#000"/>
<rect x="897" y="477" width="5" height="3" fill="#ffffff"/>
<rect x="899" y="478" width="1" height="1" fill="#000"/>
<rect x="902" y="481" width="9" height="3" fill="#ffffff"/>
<rect x="903" y="482" width="7" height="1" fill="#000"/>
<rect x="954" y="481" width="6" height="3" fill="#ffffff"/>
<rect x="955" y="482" width="3" height="1" fill="#000"/>
<rect x="897" y="481" width="5" height="3" fill="#ffffff"/>
<rect x="899" y="482" width="1" height="1" fill="#000"/>
<rect x="926" y="485" width="7" height="2" fill="#ffffff"/>
<rect x="927" y="486" width="5" height="1" fill="#000"/>
<rect x="897" y="485" width="5" height="2" fill="#ffffff"/>
<rect x="899" y="486" width="1" height="1" fill="#000"/>
<rect x="926" y="488" width="14" height="3" fill="#ffffff"/>
<rect x="927" y="489" width="12" height="1" fill="#000"/>
<rect x="897" y="488" width="5" height="3" fill="#ffffff"/>
<rect x="899" y="489" width="1" height="1" fill="#000"/>
<rect x="902" y="492" width="17" height="3" fill="#ffffff"/>
<rect x="903" y="493" width="15" height="1" fill="#000"/>
<rect x="897" y="492" width="5" height="3" fill="#ffffff"/>
<rect x="899" y="493" width="1" height="1" fill="#000"/>
<rect x="902" y="496" width="10" height="3" fill="#ffffff"/>
<rect x="903" y="497" width="8" height="1" fill="#000"/>
<rect x="926" y="496" width="18" height="3" fill="#ffffff"/>
<rect x="927" y="497" width="16" height="1" fill="#000"/>
<rect x="897" y="496" width="5" height="3" fill="#ffffff"/>
<rect x="899" y="497" width="1" height="1" fill="#000"/>
<rect x="902" y="500" width="14" height="3" fill="#ffffff"/>
<rect x="903" y="501" width="12" height="1" fill="#000"/>
<rect x="897" y="500" width="5" height="3" fill="#ffffff"/>
<rect x="899" y="501" width="1" height="1" fill="#000"/>
<rect x="902" y="504" width="13" height="3" fill="#ffffff"/>
<rect x="903" y="505" width="11" height="1" fill="#000"/>
<rect x="954" y="504" width="5" height="3" fill="#ffffff"/>
<rect x="955" y="505" width="2" height="1" fill="#000"/>
<rect x="897" y="504" width="5" height="3" fill="#ffffff"/>
<rect x="899" y="505" width="1" height="1" fill="#000"/>
<rect x="902" y="508" width="11" height="3" fill="#ffffff"/>
<rect x="903" y="509" width="9" height="1" fill="#000"/>
<rect x="954" y="508" width="5" height="3" fill="#ffffff"/>
<rect x="955" y="509" width="2" height="1" fill="#000"/>
<rect x="988" y="508" width="6" height="3" fill="#ffffff"/>
<rect x="989" y="509" width="4" height="1" fill="#000"/>
<rect x="897" y="508" width="5" height="3" fill="#ffffff"/>
<rect x="899" y="509" width="1" height="1" fill="#000"/>
<rect x="902" y="512" width="22" height="3" fill="#ffffff"/>
<rect x="903" y="513" width="15" height="1" fill="#000"/>
<rect x="919" y="513" width="4" height="1" fill="#000"/>
<rect x="926" y="512" width="15" height="3" fill="#ffffff"/>
<rect x="927" y="513" width="13" height="1" fill="#000"/>
<rect x="954" y="512" width="5" height="3" fill="#ffffff"/>
<rect x="955" y="513" width="2" height="1" fill="#000"/>
<rect x="897" y="512" width="5" height="3" fill="#ffffff"/>
<rect x="899" y="513" width="1" height="1" fill="#000"/>
<rect x="926" y="516" width="4" height="3" fill="#ffffff"/>
<rect x="927" y="517" width="2" height="1" fill="#000"/>
<rect x="897" y="516" width="5" height="3" fill="#ffffff"/>
<rect x="899" y="517" width="1" height="1" fill="#000"/>
<rect x="897" y="520" width="5" height="3" fill="#ffffff"/>
<rect x="899" y="521" width="1" height="1" fill="#000"/>
<rect x="902" y="524" width="14" height="3" fill="#ffffff"/>
<rect x="903" y="525" width="12" height="1" fill="#000"/>
<rect x="897" y="524" width="5" height="3" fill="#ffffff"/>
<rect x="899" y="525" width="1" height="1" fill="#000"/>
<rect x="954" y="528" width="6" height="3" fill="#ffffff"/>
<rect x="955" y="529" width="3" height="1" fill="#000"/>
<rect x="988" y="528" width="8" height="3" fill="#ffffff"/>
<rect x="989" y="529" width="6" height="1" fill="#000"/>
<rect x="897" y="528" width="5" height="3" fill="#ffffff"/>
<rect x="899" y="529" width="1" height="1" fill="#000"/>
<rect x="988" y="532" width="5" height="3" fill="#ffffff"/>
<rect x="989" y="533" width="3" height="1" fill="#000"/>
<rect x="897" y="532" width="5" height="3" fill="#ffffff"/>
<rect x="899" y="533" width="1" height="1" fill="#000"/>
<rect x="954" y="536" width="4" height="3" fill="#ffffff"/>
<rect x="955" y="537" width="1" height="1" fill="#000"/>
<rect x="897" y="536" width="5" height="3" fill="#ffffff"/>
<rect x="899" y="537" width="1" height="1" fill="#000"/>
<rect x="902" y="540" width="16" height="2" fill="#ffffff"/>
<rect x="903" y="541" width="14" height="1" fill="#000"/>
<rect x="954" y="540" width="4" height="2" fill="#ffffff"/>
<rect x="955" y="541" width="1" height="1" fill="#000"/>
<rect x="988" y="540" width="5" height="2" fill="#ffffff"/>
<rect x="989" y="541" width="3" height="1" fill="#000"/>
<rect x="897" y="540" width="5" height="2" fill="#ffffff"/>
<rect x="899" y="541" width="1" height="1" fill="#000"/>
<rect x="902" y="543" width="22" height="3" fill="#ffffff"/>
<rect x="903" y="544" width="13" height="1" fill="#000"/>
<rect x="917" y="544" width="6" height="1" fill="#000"/>
<rect x="926" y="543" width="6" height="3" fill="#ffffff"/>
<rect x="927" y="544" width="4" height="1" fill="#000"/>
<rect x="954" y="543" width="3" height="3" fill="#ffffff"/>
<rect x="955" y="544" width="1" height="1" fill="#000"/>
<rect x="897" y="543" width="5" height="3" fill="#ffffff"/>
<rect x="899" y="544" width="1" height="1" fill="#000"/>
<rect x="902" y="547" width="14" height="3" fill="#ffffff"/>
<rect x="903" y="548" width="12" height="1" fill="#000"/>
<rect x="926" y="547" width="6" height="3" fill="#ffffff"/>
<rect x="927" y="548" width="4" height="1" fill="#000"/>
<rect x="897" y="547" width="5" height="3" fill="#ffffff"/>
<rect x="899" y="548" width="1" height="1" fill="#000"/>
<rect x="897" y="551" width="5" height="3" fill="#ffffff"/>
<rect x="899" y="552" width="1" height="1" fill="#000"/>
<rect x="926" y="555" width="5" height="3" fill="#ffffff"/>
<rect x="927" y="556" width="3" height="1" fill="#000"/>
<rect x="988" y="555" width="8" height="3" fill="#ffffff"/>
<rect x="989" y="556" width="6" height="1" fill="#000"/>
<rect x="897" y="555" width="5" height="3" fill="#ffffff"/>
<rect x="899" y="556" width="1" height="1" fill="#000"/>
<rect x="902" y="559" width="14" height="3" fill="#ffffff"/>
<rect x="903" y="560" width="12" height="1" fill="#000"/>
<rect x="954" y="559" width="5" height="3" fill="#ffffff"/>
<rect x="955" y="560" width="2" height="1" fill="#000"/>
<rect x="897" y="559" width="5" height="3" fill="#ffffff"/>
<rect x="899" y="560" width="1" height="1" fill="#000"/>
<rect x="902" y="563" width="15" height="3" fill="#ffffff"/>
<rect x="903" y="564" width="13" height="1" fill="#000"/>
<rect x="897" y="563" width="5" height="3" fill="#ffffff"/>
<rect x="899" y="564" width="1" height="1" fill="#000"/>
<rect x="926" y="567" width="8" height="3" fill="#ffffff"/>
<rect x="927" y="568" width="6" height="1" fill="#000"/>
<rect x="954" y="567" width="3" height="3" fill="#ffffff"/>
<rect x="955" y="568" width="1" height="1" fill="#000"/>
<rect x="988" y="567" width="8" height="3" fill="#ffffff"/>
<rect x="989" y="568" width="6" height="1" fill="#000"/>
<rect x="897" y="567" width="5" height="3" fill="#ffffff"/>
<rect x="899" y="568" width="1" height="1" fill="#000"/>
<rect x="926" y="571" width="7" height="3" fill="#ffffff"/>
<rect x="927" y="572" width="5" height="1" fill="#000"/>
<rect x="954" y="571" width="6" height="3" fill="#ffffff"/>
<rect x="955" y="572" width="3" height="1" fill="#000"/>
<rect x="897" y="571" width="5" height="3" fill="#ffffff"/>
<rect x="899" y="572" width="1" height="1" fill="#000"/>
<rect x="902" y="575" width="22" height="3" fill="#ffffff"/>
<rect x="903" y="576" width="12" height="1" fill="#000"/>
<rect x="916" y="576" width="7" height="1" fill="#000"/>
<rect x="954" y="575" width="4" height="3" fill="#ffffff"/>
<rect x="955" y="576" width="1" height="1" fill="#000"/>
<rect x="897" y="575" width="5" height="3" fill="#ffffff"/>
<rect x="899" y="576" width="1" height="1" fill="#000"/>
<rect x="902" y="579" width="13" height="3" fill="#ffffff"/>
<rect x="903" y="580" width="11" height="1" fill="#000"/>
<rect x="926" y="579" width="16" height="3" fill="#ffffff"/>
<rect x="927" y="580" width="14" height="1" fill="#000"/>
<rect x="954" y="579" width="5" height="3" fill="#ffffff"/>
<rect x="955" y="580" width="2" height="1" fill="#000"/>
<rect x="897" y="579" width="5" height="3" fill="#ffffff"/>
<rect x="899" y="580" width="1" height="1" fill="#000"/>
<rect x="902" y="583" width="16" height="3" fill="#ffffff"/>
<rect x="903" y="584" width="14" height="1" fill="#000"/>
<rect x="926" y="583" width="8" height="3" fill="#ffffff"/>
<rect x="927" y="584" width="6" height="1" fill="#000"/>
<rect x="897" y="583" width="5" height="3" fill="#ffffff"/>
<rect x="899" y="584" width="1" height="1" fill="#000"/>
<rect x="902" y="587" width="11" height="3" fill="#ffffff"/>
<rect x="903" y="588" width="9" height="1" fill="#000"/>
<rect x="954" y="587" width="5" height="3" fill="#ffffff"/>
<rect x="955" y="588" width="2" height="1" fill="#000"/>
<rect x="988" y="587" width="7" height="3" fill="#ffffff"/>
<rect x="989" y="588" width="5" height="1" fill="#000"/>
<rect x="897" y="587" width="5" height="3" fill="#ffffff"/>
<rect x="899" y="588" width="1" height="1" fill="#000"/>
<rect x="926" y="591" width="5" height="3" fill="#ffffff"/>
<rect x="927" y="592" width="3" height="1" fill="#000"/>
<rect x="897" y="591" width="5" height="3" fill="#ffffff"/>
<rect x="899" y="592" width="1" height="1" fill="#000"/>
<rect x="902" y="595" width="16" height="3" fill="#ffffff"/>
<rect x="903" y="596" width="14" height="1" fill="#000"/>
<rect x="897" y="595" width="5" height="3" fill="#ffffff"/>
<rect x="899" y="596" width="1" height="1" fill="#000"/>
<rect x="954" y="599" width="4" height="2" fill="#ffffff"/>
<rect x="955" y="600" width="1" height="1" fill="#000"/>
<rect x="988" y="599" width="8" height="2" fill="#ffffff"/>
<rect x="989" y="600" width="6" height="1" fill="#000"/>
<rect x="897" y="599" width="5" height="2" fill="#ffffff"/>
<rect x="899" y="600" width="1" height="1" fill="#000"/>
<rect x="988" y="602" width="6" height="3" fill="#ffffff"/>
<rect x="989" y="603" width="4" height="1" fill="#000"/>
<rect x="897" y="602" width="5" height="3" fill="#ffffff"/>
<rect x="899" y="603" width="1" height="1" fill="#000"/>
<rect x="902" y="606" width="11" height="3" fill="#ffffff"/>
<rect x="903" y="607" width="9" height="1" fill="#000"/>
<rect x="926" y="606" width="5" height="3" fill="#ffffff"/>
<rect x="927" y="607" width="3" height="1" fill="#000"/>
<rect x="897" y="606" width="5" height="3" fill="#ffffff"/>
<rect x="899" y="607" width="1" height="1" fill="#000"/>
<rect x="902" y="610" width="17" height="3" fill="#ffffff"/>
<rect x="903" y="611" width="15" height="1" fill="#000"/>
<rect x="926" y="610" width="6" height="3" fill="#ffffff"/>
<rect x="927" y="611" width="4" height="1" fill="#000"/>
<rect x="897" y="610" width="5" height="3" fill="#ffffff"/>
<rect x="899" y="611" width="1" height="1" fill="#000"/>
<rect x="897" y="614" width="5" height="3" fill="#ffffff"/>
<rect x="899" y="615" width="1" height="1" fill="#000"/>
<rect x="926" y="618" width="6" height="3" fill="#ffffff"/>
<rect x="927" y="619" width="4" height="1" fill="#000"/>
<rect x="897" y="618" width="5" height="3" fill="#ffffff"/>
<rect x="899" y="619" width="1" height="1" fill="#000"/>
<rect x="926" y="622" width="11" height="3" fill="#ffffff"/>
<rect x="927" y="623" width="9" height="1" fill="#000"/>
<rect x="954" y="622" width="3" height="3" fill="#ffffff"/>
<rect x="955" y="623" width="1" height="1" fill="#000"/>
<rect x="897" y="622" width="5" height="3" fill="#ffffff"/>
<rect x="899" y="623" width="1" height="1" fill="#000"/>
<rect x="902" y="626" width="22" height="3" fill="#ffffff"/>
<rect x="903" y="627" width="11" height="1" fill="#000"/>
<rect x="915" y="627" width="8" height="1" fill="#000"/>
<rect x="988" y="626" width="5" height="3" fill="#ffffff"/>
<rect x="989" y="627" width="3" height="1" fill="#000"/>
<rect x="897" y="626" width="5" height="3" fill="#ffffff"/>
<rect x="899" y="627" width="1" height="1" fill="#000"/>
<rect x="902" y="630" width="22" height="3" fill="#ffffff"/>
<rect x="903" y="631" width="13" height="1" fill="#000"/>
<rect x="917" y="631" width="6" height="1" fill="#000"/>
<rect x="897" y="630" width="5" height="3" fill="#ffffff"/>
<rect x="899" y="631" width="1" height="1" fill="#000"/>
<rect x="902" y="634" width="22" height="3" fill="#ffffff"/>
<rect x="903" y="635" width="13" height="1" fill="#000"/>
<rect x="917" y="635" width="6" height="1" fill="#000"/>
<rect x="954" y="634" width="4" height="3" fill="#ffffff"/>
<rect x="955" y="635" width="1" height="1" fill="#000"/>
<rect x="988" y="634" width="4" height="3" fill="#ffffff"/>
<rect x="989" y="635" width="2" height="1" fill="#000"/>
<rect x="897" y="634" width="5" height="3" fill="#ffffff"/>
<rect x="899" y="635" width="1" height="1" fill="#000"/>
<rect x="954" y="638" width="6" height="3" fill="#ffffff"/>
<rect x="955" y="639" width="3" height="1" fill="#000"/>
<rect x="897" y="638" width="5" height="3" fill="#ffffff"/>
<rect x="899" y="639" width="1" height="1" fill="#000"/>
<line x1="897" y1="401.5" x2="998" y2="401.5" stroke="#ffffff" stroke-width="1"/>
<line x1="897" y1="405.5" x2="998" y2="405.5" stroke="#ffffff" stroke-width="1"/>
<line x1="897" y1="409.5" x2="998" y2="409.5" stroke="#ffffff" stroke-width="1"/>
<line x1="897" y1="413.5" x2="998" y2="413.5" stroke="#ffffff" stroke-width="1"/>
<line x1="897" y1="417.5" x2="998" y2="417.5" stroke="#ffffff" stroke-width="1"/>
<line x1="897" y1="421.5" x2="998" y2="421.5" stroke="#ffffff" stroke-width="1"/>
<line x1="897" y1="425.5" x2="998" y2="425.5" stroke="#ffffff" stroke-width="1"/>
<line x1="897" y1="429.5" x2="998" y2="429.5" stroke="#ffffff" stroke-width="1"/>
<line x1="897" y1="432.5" x2="998" y2="432.5" stroke="#ffffff" stroke-width="1"/>
<line x1="897" y1="436.5" x2="998" y2="436.5" stroke="#ffffff" stroke-width="1"/>
<line x1="897" y1="440.5" x2="998" y2="440.5" stroke="#ffffff" stroke-width="1"/>
<line x1="897" y1="444.5" x2="998" y2="444.5" stroke="#ffffff" stroke-width="1"/>
<line x1="897" y1="448.5" x2="998" y2="448.5" stroke="#ffffff" stroke-width="1"/>
<line x1="897" y1="452.5" x2="998" y2="452.5" stroke="#ffffff" stroke-width="1"/>
<line x1="897" y1="456.5" x2="998" y2="456.5" stroke="#ffffff" stroke-width="1"/>
<line x1="897" y1="460.5" x2="998" y2="460.5" stroke="#ffffff" stroke-width="1"/>
<line x1="897" y1="464.5" x2="998" y2="464.5" stroke="#ffffff" stroke-width="1"/>
<line x1="897" y1="468.5" x2="998" y2="468.5" stroke="#ffffff" stroke-width="1"/>
<line x1="897" y1="472.5" x2="998" y2="472.5" stroke="#ffffff" stroke-width="1"/>
<line x1="897" y1="476.5" x2="998" y2="476.5" stroke="#ffffff" stroke-width="1"/>
<line x1="897" y1="480.5" x2="998" y2="480.5" stroke="#ffffff" stroke-width="1"/>
<line x1="897" y1="484.5" x2="998" y2="484.5" stroke="#ffffff" stroke-width="1"/>
<line x1="897" y1="487.5" x2="998" y2="487.5" stroke="#ffffff" stroke-width="1"/>
<line x1="897" y1="491.5" x2="998" y2="491.5" stroke="#ffffff" stroke-width="1"/>
<line x1="897" y1="495.5" x2="998" y2="495.5" stroke="#ffffff" stroke-width="1"/>
<line x1="897" y1="499.5" x2="998" y2="499.5" stroke="#ffffff" stroke-width="1"/>
<line x1="897" y1="503.5" x2="998" y2="503.5" stroke="#ffffff" stroke-width="1"/>
<line x1="897" y1="507.5" x2="998" y2="507.5" stroke="#ffffff" stroke-width="1"/>
<line x1="897" y1="511.5" x2="998" y2="511.5" stroke="#ffffff" stroke-width="1"/>
<line x1="897" y1="515.5" x2="998" y2="515.5" stroke="#ffffff" stroke-width="1"/>
<line x1="897" y1="519.5" x2="998" y2="519.5" stroke="#ffffff" stroke-width="1"/>
<line x1="897" y1="523.5" x2="998" y2="523.5" stroke="#ffffff" stroke-width="1"/>
<line x1="897" y1="527.5" x2="998" y2="527.5" stroke="#ffffff" stroke-width="1"/>
<line x1="897" y1="531.5" x2="998" y2="531.5" stroke="#ffffff" stroke-width="1"/>
<line x1="897" y1="535.5" x2="998" y2="535.5" stroke="#ffffff" stroke-width="1"/>
<line x1="897" y1="539.5" x2="998" y2="539.5" stroke="#ffffff" stroke-width="1"/>
<line x1="897" y1="542.5" x2="998" y2="542.5" stroke="#ffffff" stroke-width="1"/>
<line x1="897" y1="546.5" x2="998" y2="546.5" stroke="#ffffff" stroke-width="1"/>
<line x1="897" y1="550.5" x2="998" y2="550.5" stroke="#ffffff" stroke-width="1"/>
<line x1="897" y1="554.5" x2="998" y2="554.5" stroke="#ffffff" stroke-width="1"/>
<line x1="897" y1="558.5" x2="998" y2="558.5" stroke="#ffffff" stroke-width="1"/>
<line x1="897" y1="562.5" x2="998" y2="562.5" stroke="#ffffff" stroke-width="1"/>
<line x1="897" y1="566.5" x2="998" y2="566.5" stroke="#ffffff" stroke-width="1"/>
<line x1="897" y1="570.5" x2="998" y2="570.5" stroke="#ffffff" stroke-width="1"/>
<line x1="897" y1="574.5" x2="998" y2="574.5" stroke="#ffffff" stroke-width="1"/>
<line x1="897" y1="578.5" x2="998" y2="578.5" stroke="#ffffff" stroke-width="1"/>
<line x1="897" y1="582.5" x2="998" y2="582.5" stroke="#ffffff" stroke-width="1"/>
<line x1="897" y1="586.5" x2="998" y2="586.5" stroke="#ffffff" stroke-width="1"/>
<line x1="897" y1="590.5" x2="998" y2="590.5" stroke="#ffffff" stroke-width="1"/>
<line x1="897" y1="594.5" x2="998" y2="594.5" stroke="#ffffff" stroke-width="1"/>
<line x1="897" y1="598.5" x2="998" y2="598.5" stroke="#ffffff" stroke-width="1"/>
<line x1="897" y1="601.5" x2="998" y2="601.5" stroke="#ffffff" stroke-width="1"/>
<line x1="897" y1="605.5" x2="998" y2="605.5" stroke="#ffffff" stroke-width="1"/>
<line x1="897" y1="609.5" x2="998" y2="609.5" stroke="#ffffff" stroke-width="1"/>
<line x1="897" y1="613.5" x2="998" y2="613.5" stroke="#ffffff" stroke-width="1"/>
<line x1="897" y1="617.5" x2="998" y2="617.5" stroke="#ffffff" stroke-width="1"/>
<line x1="897" y1="621.5" x2="998" y2="621.5" stroke="#ffffff" stroke-width="1"/>
<line x1="897" y1="625.5" x2="998" y2="625.5" stroke="#ffffff" stroke-width="1"/>
<line x1="897" y1="629.5" x2="998" y2="629.5" stroke="#ffffff" stroke-width="1"/>
<line x1="897" y1="633.5" x2="998" y2="633.5" stroke="#ffffff" stroke-width="1"/>
<line x1="897" y1="637.5" x2="998" y2="637.5" stroke="#ffffff" stroke-width="1"/>
<line x1="897" y1="641.5" x2="998" y2="641.5" stroke="#ffffff" stroke-width="1"/>
<rect x="897" y="401" width="2" height="240" fill="#ffffff"/>
<rect x="924" y="401" width="2" height="240" fill="#ffffff"/>
<rect x="948" y="401" width="2" height="240" fill="#ffffff"/>
<rect x="952" y="401" width="2" height="240" fill="#ffffff"/>
<rect x="974" y="401" width="1" height="240" fill="#ffffff"/>
<rect x="979" y="401" width="2" height="240" fill="#ffffff"/>
<rect x="986" y="401" width="2" height="240" fill="#ffffff"/>
<rect x="1054" y="402" width="3" height="3" fill="#ffffff"/>
<rect x="1055" y="403" width="1" height="1" fill="#000"/>
<rect x="1088" y="402" width="4" height="3" fill="#ffffff"/>
<rect x="1089" y="403" width="2" height="1" fill="#000"/>
<rect x="1026" y="406" width="5" height="3" fill="#ffffff"/>
<rect x="1027" y="407" width="3" height="1" fill="#000"/>
<rect x="1002" y="410" width="11" height="3" fill="#ffffff"/>
<rect x="1003" y="411" width="9" height="1" fill="#000"/>
<rect x="1026" y="410" width="4" height="3" fill="#ffffff"/>
<rect x="1027" y="411" width="2" height="1" fill="#000"/>
<rect x="1054" y="410" width="4" height="3" fill="#ffffff"/>
<rect x="1055" y="411" width="1" height="1" fill="#000"/>
<rect x="1088" y="410" width="4" height="3" fill="#ffffff"/>
<rect x="1089" y="411" width="2" height="1" fill="#000"/>
<rect x="1054" y="414" width="3" height="3" fill="#ffffff"/>
<rect x="1055" y="415" width="1" height="1" fill="#000"/>
<rect x="1026" y="418" width="6" height="3" fill="#ffffff"/>
<rect x="1027" y="419" width="4" height="1" fill="#000"/>
<rect x="1054" y="418" width="6" height="3" fill="#ffffff"/>
<rect x="1055" y="419" width="3" height="1" fill="#000"/>
<rect x="1026" y="422" width="3" height="3" fill="#ffffff"/>
<rect x="1027" y="423" width="1" height="1" fill="#000"/>
<rect x="1054" y="422" width="5" height="3" fill="#ffffff"/>
<rect x="1055" y="423" width="2" height="1" fill="#000"/>
<rect x="1088" y="422" width="8" height="3" fill="#ffffff"/>
<rect x="1089" y="423" width="6" height="1" fill="#000"/>
<rect x="1002" y="426" width="17" height="3" fill="#ffffff"/>
<rect x="1003" y="427" width="15" height="1" fill="#000"/>
<rect x="1026" y="426" width="13" height="3" fill="#ffffff"/>
<rect x="1027" y="427" width="11" height="1" fill="#000"/>
<rect x="1054" y="426" width="4" height="3" fill="#ffffff"/>
<rect x="1055" y="427" width="1" height="1" fill="#000"/>
<rect x="1088" y="426" width="6" height="3" fill="#ffffff"/>
<rect x="1089" y="427" width="4" height="1" fill="#000"/>
<rect x="1026" y="430" width="4" height="2" fill="#ffffff"/>
<rect x="1027" y="431" width="2" height="1" fill="#000"/>
<rect x="1002" y="433" width="11" height="3" fill="#ffffff"/>
<rect x="1003" y="434" width="9" height="1" fill="#000"/>
<rect x="1088" y="433" width="4" height="3" fill="#ffffff"/>
<rect x="1089" y="434" width="2" height="1" fill="#000"/>
<rect x="1002" y="437" width="10" height="3" fill="#ffffff"/>
<rect x="1003" y="438" width="8" height="1" fill="#000"/>
<rect x="1026" y="437" width="17" height="3" fill="#ffffff"/>
<rect x="1027" y="438" width="15" height="1" fill="#000"/>
<rect x="1054" y="437" width="6" height="3" fill="#ffffff"/>
<rect x="1055" y="438" width="3" height="1" fill="#000"/>
<rect x="1002" y="441" width="17" height="3" fill="#ffffff"/>
<rect x="1003" y="442" width="15" height="1" fill="#000"/>
<rect x="1026" y="441" width="8" height="3" fill="#ffffff"/>
<rect x="1027" y="442" width="6" height="1" fill="#000"/>
<rect x="1054" y="441" width="4" height="3" fill="#ffffff"/>
<rect x="1055" y="442" width="1" height="1" fill="#000"/>
<rect x="1002" y="445" width="22" height="3" fill="#ffffff"/>
<rect x="1003" y="446" width="15" height="1" fill="#000"/>
<rect x="1019" y="446" width="4" height="1" fill="#000"/>
<rect x="1026" y="445" width="3" height="3" fill="#ffffff"/>
<rect x="1027" y="446" width="1" height="1" fill="#000"/>
<rect x="1054" y="445" width="6" height="3" fill="#ffffff"/>
<rect x="1055" y="446" width="3" height="1" fill="#000"/>
<rect x="1002" y="449" width="15" height="3" fill="#ffffff"/>
<rect x="1003" y="450" width="13" height="1" fill="#000"/>
<rect x="1026" y="449" width="4" height="3" fill="#ffffff"/>
<rect x="1027" y="450" width="2" height="1" fill="#000"/>
<rect x="1054" y="449" width="5" height="3" fill="#ffffff"/>
<rect x="1055" y="450" width="2" height="1" fill="#000"/>
<rect x="1002" y="453" width="14" height="3" fill="#ffffff"/>
<rect x="1003" y="454" width="12" height="1" fill="#000"/>
<rect x="1026" y="457" width="13" height="3" fill="#ffffff"/>
<rect x="1027" y="458" width="11" height="1" fill="#000"/>
<rect x="1002" y="461" width="9" height="3" fill="#ffffff"/>
<rect x="1003" y="462" width="7" height="1" fill="#000"/>
<rect x="1026" y="461" width="4" height="3" fill="#ffffff"/>
<rect x="1027" y="462" width="2" height="1" fill="#000"/>
<rect x="1054" y="461" width="6" height="3" fill="#ffffff"/>
<rect x="1055" y="462" width="3" height="1" fill="#000"/>
<rect x="1002" y="465" width="15" height="3" fill="#ffffff"/>
<rect x="1003" y="466" width="13" height="1" fill="#000"/>
<rect x="1026" y="465" width="16" height="3" fill="#ffffff"/>
<rect x="1027" y="466" width="14" height="1" fill="#000"/>
<rect x="1054" y="465" width="6" height="3" fill="#ffffff"/>
<rect x="1055" y="466" width="3" height="1" fill="#000"/>
<rect x="1088" y="465" width="5" height="3" fill="#ffffff"/>
<rect x="1089" y="466" width="3" height="1" fill="#000"/>
<rect x="1026" y="469" width="6" height="3" fill="#ffffff"/>
<rect x="1027" y="470" width="4" height="1" fill="#000"/>
<rect x="1026" y="473" width="4" height="3" fill="#ffffff"/>
<rect x="1027" y="474" width="2" height="1" fill="#000"/>
<rect x="1002" y="477" width="9" height="3" fill="#ffffff"/>
<rect x="1003" y="478" width="7" height="1" fill="#000"/>
<rect x="1026" y="477" width="5" height="3" fill="#ffffff"/>
<rect x="1027" y="478" width="3" height="1" fill="#000"/>
<rect x="1054" y="477" width="3" height="3" fill="#ffffff"/>
<rect x="1055" y="478" width="1" height="1" fill="#000"/>
<rect x="1026" y="481" width="12" height="3" fill="#ffffff"/>
<rect x="1027" y="482" width="10" height="1" fill="#000"/>
<rect x="1054" y="481" width="5" height="3" fill="#ffffff"/>
<rect x="1055" y="482" width="2" height="1" fill="#000"/>
<rect x="1088" y="481" width="5" height="3" fill="#ffffff"/>
<rect x="1089" y="482" width="3" height="1" fill="#000"/>
<rect x="1026" y="485" width="4" height="2" fill="#ffffff"/>
<rect x="1027" y="486" width="2" height="1" fill="#000"/>
<rect x="1026" y="492" width="5" height="3" fill="#ffffff"/>
<rect x="1027" y="493" width="3" height="1" fill="#000"/>
<rect x="1054" y="492" width="6" height="3" fill="#ffffff"/>
<rect x="1055" y="493" width="3" height="1" fill="#000"/>
<rect x="1088" y="492" width="5" height="3" fill="#ffffff"/>
<rect x="1089" y="493" width="3" height="1" fill="#000"/>
<rect x="1002" y="496" width="12" height="3" fill="#ffffff"/>
<rect x="1003" y="497" width="10" height="1" fill="#000"/>
<rect x="1026" y="500" width="3" height="3" fill="#ffffff"/>
<rect x="1027" y="501" width="1" height="1" fill="#000"/>
<rect x="1002" y="504" width="9" height="3" fill="#ffffff"/>
<rect x="1003" y="505" width="7" height="1" fill="#000"/>
<rect x="1026" y="504" width="18" height="3" fill="#ffffff"/>
<rect x="1027" y="505" width="16" height="1" fill="#000"/>
<rect x="1026" y="508" width="6" height="3" fill="#ffffff"/>
<rect x="1027" y="509" width="4" height="1" fill="#000"/>
<rect x="1054" y="508" width="6" height="3" fill="#ffffff"/>
<rect x="1055" y="509" width="3" height="1" fill="#000"/>
<rect x="1088" y="508" width="5" height="3" fill="#ffffff"/>
<rect x="1089" y="509" width="3" height="1" fill="#000"/>
<rect x="1026" y="512" width="10" height="3" fill="#ffffff"/>
<rect x="1027" y="513" width="8" height="1" fill="#000"/>
<rect x="1054" y="512" width="6" height="3" fill="#ffffff"/>
<rect x="1055" y="513" width="3" height="1" fill="#000"/>
<rect x="1088" y="516" width="8" height="3" fill="#ffffff"/>
<rect x="1089" y="517" width="6" height="1" fill="#000"/>
<rect x="1026" y="520" width="4" height="3" fill="#ffffff"/>
<rect x="1027" y="521" width="2" height="1" fill="#000"/>
<rect x="1054" y="520" width="5" height="3" fill="#ffffff"/>
<rect x="1055" y="521" width="2" height="1" fill="#000"/>
<rect x="1002" y="524" width="11" height="3" fill="#ffffff"/>
<rect x="1003" y="525" width="9" height="1" fill="#000"/>
<rect x="1088" y="524" width="4" height="3" fill="#ffffff"/>
<rect x="1089" y="525" width="2" height="1" fill="#000"/>
<rect x="1002" y="528" width="22" height="3" fill="#ffffff"/>
<rect x="1003" y="529" width="11" height="1" fill="#000"/>
<rect x="1015" y="529" width="8" height="1" fill="#000"/>
<rect x="1026" y="528" width="16" height="3" fill="#ffffff"/>
<rect x="1027" y="529" width="14" height="1" fill="#000"/>
<rect x="1088" y="528" width="4" height="3" fill="#ffffff"/>
<rect x="1089" y="529" width="2" height="1" fill="#000"/>
<rect x="1026" y="532" width="6" height="3" fill="#ffffff"/>
<rect x="1027" y="533" width="4" height="1" fill="#000"/>
<rect x="1026" y="536" width="6" height="3" fill="#ffffff"/>
<rect x="1027" y="537" width="4" height="1" fill="#000"/>
<rect x="1054" y="536" width="5" height="3" fill="#ffffff"/>
<rect x="1055" y="537" width="2" height="1" fill="#000"/>
<rect x="1002" y="540" width="11" height="2" fill="#ffffff"/>
<rect x="1003" y="541" width="9" height="1" fill="#000"/>
<rect x="1026" y="540" width="17" height="2" fill="#ffffff"/>
<rect x="1027" y="541" width="15" height="1" fill="#000"/>
<rect x="1054" y="540" width="3" height="2" fill="#ffffff"/>
<rect x="1055" y="541" width="1" height="1" fill="#000"/>
<rect x="1054" y="543" width="6" height="3" fill="#ffffff"/>
<rect x="1055" y="544" width="3" height="1" fill="#000"/>
<rect x="1002" y="547" width="12" height="3" fill="#ffffff"/>
<rect x="1003" y="548" width="10" height="1" fill="#000"/>
<rect x="1002" y="551" width="14" height="3" fill="#ffffff"/>
<rect x="1003" y="552" width="12" height="1" fill="#000"/>
<rect x="1026" y="551" width="7" height="3" fill="#ffffff"/>
<rect x="1027" y="552" width="5" height="1" fill="#000"/>
<rect x="1054" y="551" width="5" height="3" fill="#ffffff"/>
<rect x="1055" y="552" width="2" height="1" fill="#000"/>
<rect x="1054" y="555" width="3" height="3" fill="#ffffff"/>
<rect x="1055" y="556" width="1" height="1" fill="#000"/>
<rect x="1026" y="559" width="6" height="3" fill="#ffffff"/>
<rect x="1027" y="560" width="4" height="1" fill="#000"/>
<rect x="1088" y="559" width="6" height="3" fill="#ffffff"/>
<rect x="1089" y="560" width="4" height="1" fill="#000"/>
<rect x="1002" y="563" width="13" height="3" fill="#ffffff"/>
<rect x="1003" y="564" width="11" height="1" fill="#000"/>
<rect x="1026" y="563" width="15" height="3" fill="#ffffff"/>
<rect x="1027" y="564" width="13" height="1" fill="#000"/>
<rect x="1054" y="563" width="3" height="3" fill="#ffffff"/>
<rect x="1055" y="564" width="1" height="1" fill="#000"/>
<rect x="1026" y="567" width="3" height="3" fill="#ffffff"/>
<rect x="1027" y="568" width="1" height="1" fill="#000"/>
<rect x="1054" y="567" width="4" height="3" fill="#ffffff"/>
<rect x="1055" y="568" width="1" height="1" fill="#000"/>
<rect x="1002" y="571" width="22" height="3" fill="#ffffff"/>
<rect x="1003" y="572" width="11" height="1" fill="#000"/>
<rect x="1015" y="572" width="8" height="1" fill="#000"/>
<rect x="1088" y="571" width="7" height="3" fill="#ffffff"/>
<rect x="1089" y="572" width="5" height="1" fill="#000"/>
<rect x="1002" y="575" width="12" height="3" fill="#ffffff"/>
<rect x="1003" y="576" width="10" height="1" fill="#000"/>
<rect x="1026" y="575" width="3" height="3" fill="#ffffff"/>
<rect x="1027" y="576" width="1" height="1" fill="#000"/>
<rect x="1054" y="575" width="4" height="3" fill="#ffffff"/>
<rect x="1055" y="576" width="1" height="1" fill="#000"/>
<rect x="1002" y="579" width="17" height="3" fill="#ffffff"/>
<rect x="1003" y="580" width="15" height="1" fill="#000"/>
<rect x="1088" y="579" width="7" height="3" fill="#ffffff"/>
<rect x="1089" y="580" width="5" height="1" fill="#000"/>
<rect x="1026" y="583" width="5" height="3" fill="#ffffff"/>
<rect x="1027" y="584" width="3" height="1" fill="#000"/>
<rect x="1054" y="583" width="4" height="3" fill="#ffffff"/>
<rect x="1055" y="584" width="1" height="1" fill="#000"/>
<rect x="1002" y="587" width="22" height="3" fill="#ffffff"/>
<rect x="1003" y="588" width="12" height="1" fill="#000"/>
<rect x="1016" y="588" width="7" height="1" fill="#000"/>
<rect x="1026" y="587" width="8" height="3" fill="#ffffff"/>
<rect x="1027" y="588" width="6" height="1" fill="#000"/>
<rect x="1054" y="591" width="6" height="3" fill="#ffffff"/>
<rect x="1055" y="592" width="3" height="1" fill="#000"/>
<rect x="1002" y="595" width="9" height="3" fill="#ffffff"/>
<rect x="1003" y="596" width="7" height="1" fill="#000"/>
<rect x="1026" y="595" width="7" height="3" fill="#ffffff"/>
<rect x="1027" y="596" width="5" height="1" fill="#000"/>
<rect x="1054" y="595" width="5" height="3" fill="#ffffff"/>
<rect x="1055" y="596" width="2" height="1" fill="#000"/>
<rect x="1002" y="599" width="13" height="2" fill="#ffffff"/>
<rect x="1003" y="600" width="11" height="1" fill="#000"/>
<rect x="1054" y="599" width="5" height="2" fill="#ffffff"/>
<rect x="1055" y="600" width="2" height="1" fill="#000"/>
<rect x="1026" y="602" width="4" height="3" fill="#ffffff"/>
<rect x="1027" y="603" width="2" height="1" fill="#000"/>
<rect x="1026" y="606" width="6" height="3" fill="#ffffff"/>
<rect x="1027" y="607" width="4" height="1" fill="#000"/>
<rect x="1054" y="606" width="4" height="3" fill="#ffffff"/>
<rect x="1055" y="607" width="1" height="1" fill="#000"/>
<rect x="1088" y="606" width="5" height="3" fill="#ffffff"/>
<rect x="1089" y="607" width="3" height="1" fill="#000"/>
<rect x="1002" y="610" width="22" height="3" fill="#ffffff"/>
<rect x="1003" y="611" width="9" height="1" fill="#000"/>
<rect x="1013" y="611" width="10" height="1" fill="#000"/>
<rect x="1026" y="610" width="6" height="3" fill="#ffffff"/>
<rect x="1027" y="611" width="4" height="1" fill="#000"/>
<rect x="1054" y="610" width="5" height="3" fill="#ffffff"/>
<rect x="1055" y="611" width="2" height="1" fill="#000"/>
<line x1="997" y1="401.5" x2="1098" y2="401.5" stroke="#ffffff" stroke-width="1"/>
<line x1="997" y1="405.5" x2="1098" y2="405.5" stroke="#ffffff" stroke-width="1"/>
<line x1="997" y1="409.5" x2="1098" y2="409.5" stroke="#ffffff" stroke-width="1"/>
<line x1="997" y1="413.5" x2="1098" y2="413.5" stroke="#ffffff" stroke-width="1"/>
<line x1="997" y1="417.5" x2="1098" y2="417.5" stroke="#ffffff" stroke-width="1"/>
<line x1="997" y1="421.5" x2="1098" y2="421.5" stroke="#ffffff" stroke-width="1"/>
<line x1="997" y1="425.5" x2="1098" y2="425.5" stroke="#ffffff" stroke-width="1"/>
<line x1="997" y1="429.5" x2="1098" y2="429.5" stroke="#ffffff" stroke-width="1"/>
<line x1="997" y1="432.5" x2="1098" y2="432.5" stroke="#ffffff" stroke-width="1"/>
<line x1="997" y1="436.5" x2="1098" y2="436.5" stroke="#ffffff" stroke-width="1"/>
<line x1="997" y1="440.5" x2="1098" y2="440.5" stroke="#ffffff" stroke-width="1"/>
<line x1="997" y1="444.5" x2="1098" y2="444.5" stroke="#ffffff" stroke-width="1"/>
<line x1="997" y1="448.5" x2="1098" y2="448.5" stroke="#ffffff" stroke-width="1"/>
<line x1="997" y1="452.5" x2="1098" y2="452.5" stroke="#ffffff" stroke-width="1"/>
<line x1="997" y1="456.5" x2="1098" y2="456.5" stroke="#ffffff" stroke-width="1"/>
<line x1="997" y1="460.5" x2="1098" y2="460.5" stroke="#ffffff" stroke-width="1"/>
<line x1="997" y1="464.5" x2="1098" y2="464.5" stroke="#ffffff" stroke-width="1"/>
<line x1="997" y1="468.5" x2="1098" y2="468.5" stroke="#ffffff" stroke-width="1"/>
<line x1="997" y1="472.5" x2="1098" y2="472.5" stroke="#ffffff" stroke-width="1"/>
<line x1="997" y1="476.5" x2="1098" y2="476.5" stroke="#ffffff" stroke-width="1"/>
<line x1="997" y1="480.5" x2="1098" y2="480.5" stroke="#ffffff" stroke-width="1"/>
<line x1="997" y1="484.5" x2="1098" y2="484.5" stroke="#ffffff" stroke-width="1"/>
<line x1="997" y1="487.5" x2="1098" y2="487.5" stroke="#ffffff" stroke-width="1"/>
<line x1="997" y1="491.5" x2="1098" y2="491.5" stroke="#ffffff" stroke-width="1"/>
<line x1="997" y1="495.5" x2="1098" y2="495.5" stroke="#ffffff" stroke-width="1"/>
<line x1="997" y1="499.5" x2="1098" y2="499.5" stroke="#ffffff" stroke-width="1"/>
<line x1="997" y1="503.5" x2="1098" y2="503.5" stroke="#ffffff" stroke-width="1"/>
<line x1="997" y1="507.5" x2="1098" y2="507.5" stroke="#ffffff" stroke-width="1"/>
<line x1="997" y1="511.5" x2="1098" y2="511.5" stroke="#ffffff" stroke-width="1"/>
<line x1="997" y1="515.5" x2="1098" y2="515.5" stroke="#ffffff" stroke-width="1"/>
<line x1="997" y1="519.5" x2="1098" y2="519.5" stroke="#ffffff" stroke-width="1"/>
<line x1="997" y1="523.5" x2="1098" y2="523.5" stroke="#ffffff" stroke-width="1"/>
<line x1="997" y1="527.5" x2="1098" y2="527.5" stroke="#ffffff" stroke-width="1"/>
<line x1="997" y1="531.5" x2="1098" y2="531.5" stroke="#ffffff" stroke-width="1"/>
<line x1="997" y1="535.5" x2="1098" y2="535.5" stroke="#ffffff" stroke-width="1"/>
<line x1="997" y1="539.5" x2="1098" y2="539.5" stroke="#ffffff" stroke-width="1"/>
<line x1="997" y1="542.5" x2="1098" y2="542.5" stroke="#ffffff" stroke-width="1"/>
<line x1="997" y1="546.5" x2="1098" y2="546.5" stroke="#ffffff" stroke-width="1"/>
<line x1="997" y1="550.5" x2="1098" y2="550.5" stroke="#ffffff" stroke-width="1"/>
<line x1="997" y1="554.5" x2="1098" y2="554.5" stroke="#ffffff" stroke-width="1"/>
<line x1="997" y1="558.5" x2="1098" y2="558.5" stroke="#ffffff" stroke-width="1"/>
<line x1="997" y1="562.5" x2="1098" y2="562.5" stroke="#ffffff" stroke-width="1"/>
<line x1="997" y1="566.5" x2="1098" y2="566.5" stroke="#ffffff" stroke-width="1"/>
<line x1="997" y1="570.5" x2="1098" y2="570.5" stroke="#ffffff" stroke-width="1"/>
<line x1="997" y1="574.5" x2="1098" y2="574.5" stroke="#ffffff" stroke-width="1"/>
<line x1="997" y1="578.5" x2="1098" y2="578.5" stroke="#ffffff" stroke-width="1"/>
<line x1="997" y1="582.5" x2="1098" y2="582.5" stroke="#ffffff" stroke-width="1"/>
<line x1="997" y1="586.5" x2="1098" y2="586.5" stroke="#ffffff" stroke-width="1"/>
<line x1="997" y1="590.5" x2="1098" y2="590.5" stroke="#ffffff" stroke-width="1"/>
<line x1="997" y1="594.5" x2="1098" y2="594.5" stroke="#ffffff" stroke-width="1"/>
<line x1="997" y1="598.5" x2="1098" y2="598.5" stroke="#ffffff" stroke-width="1"/>
<line x1="997" y1="601.5" x2="1098" y2="601.5" stroke="#ffffff" stroke-width="1"/>
<line x1="997" y1="605.5" x2="1098" y2="605.5" stroke="#ffffff" stroke-width="1"/>
<line x1="997" y1="609.5" x2="1098" y2="609.5" stroke="#ffffff" stroke-width="1"/>
<rect x="997" y="401" width="2" height="210" fill="#ffffff"/>
<rect x="1024" y="401" width="2" height="210" fill="#ffffff"/>
<rect x="1048" y="401" width="2" height="210" fill="#ffffff"/>
<rect x="1052" y="401" width="2" height="210" fill="#ffffff"/>
<rect x="1074" y="401" width="1" height="210" fill="#ffffff"/>
<rect x="1079" y="401" width="2" height="210" fill="#ffffff"/>
<rect x="1086" y="401" width="2" height="210" fill="#ffffff"/>
<rect x="1000" y="401" width="1" height="210" fill="#ffffff"/>
<rect x="1096" y="401" width="1" height="240" fill="#ffffff"/>
<rect x="998" y="604" width="98" height="7" fill="#000"/>
<line x1="997.5" y1="603" x2="997.5" y2="611" stroke="#ffffff" stroke-width="1"/>
<line x1="1001.5" y1="603" x2="1001.5" y2="611" stroke="#ffffff" stroke-width="1"/>
<line x1="1023.5" y1="603" x2="1023.5" y2="611" stroke="#ffffff" stroke-width="1"/>
<line x1="1048.5" y1="603" x2="1048.5" y2="611" stroke="#ffffff" stroke-width="1"/>
<line x1="1051.5" y1="603" x2="1051.5" y2="611" stroke="#ffffff" stroke-width="1"/>
<line x1="1073.5" y1="603" x2="1073.5" y2="611" stroke="#ffffff" stroke-width="1"/>
<line x1="1079.5" y1="603" x2="1079.5" y2="611" stroke="#ffffff" stroke-width="1"/>
<line x1="1085.5" y1="603" x2="1085.5" y2="611" stroke="#ffffff" stroke-width="1"/>
<line x1="1096.5" y1="603" x2="1096.5" y2="611" stroke="#ffffff" stroke-width="1"/>
<rect x="1010.5" y="605.5" width="6" height="3" rx="1" fill="none" stroke="#fff"/>
<rect x="1033.5" y="605.5" width="6" height="3" rx="1" fill="none" stroke="#fff"/>
<rect x="1059.5" y="605.5" width="6" height="3" rx="1" fill="none" stroke="#fff"/>
<rect x="1089.5" y="605.5" width="6" height="3" rx="1" fill="none" stroke="#fff"/>
<rect x="1076" y="605" width="3" height="2" fill="#ffffff"/>
<rect x="1075" y="609" width="2" height="2" fill="#ffffff"/>
<rect x="1082" y="605" width="3" height="2" fill="#ffffff"/>
<rect x="1081" y="609" width="2" height="2" fill="#ffffff"/>
<rect x="997" y="611" width="100" height="30" fill="#000"/>
<line x1="997" y1="611.5" x2="1042" y2="611.5" stroke="#ffffff" stroke-width="1"/>
<line x1="997" y1="615.5" x2="1042" y2="615.5" stroke="#ffffff" stroke-width="1"/>
<line x1="997" y1="619.5" x2="1042" y2="619.5" stroke="#ffffff" stroke-width="1"/>
<line x1="997" y1="623.5" x2="1042" y2="623.5" stroke="#ffffff" stroke-width="1"/>
<line x1="997" y1="626.5" x2="1042" y2="626.5" stroke="#ffffff" stroke-width="1"/>
<line x1="997" y1="631.5" x2="1042" y2="631.5" stroke="#ffffff" stroke-width="1"/>
<line x1="997" y1="636.5" x2="1042" y2="636.5" stroke="#ffffff" stroke-width="1"/>
<line x1="997" y1="641.5" x2="1042" y2="641.5" stroke="#ffffff" stroke-width="1"/>
<line x1="997.5" y1="611" x2="997.5" y2="641" stroke="#ffffff" stroke-width="1"/>
<line x1="1003.5" y1="611" x2="1003.5" y2="641" stroke="#ffffff" stroke-width="1"/>
<line x1="1009.5" y1="611" x2="1009.5" y2="641" stroke="#ffffff" stroke-width="1"/>
<line x1="1018.5" y1="611" x2="1018.5" y2="641" stroke="#ffffff" stroke-width="1"/>
<line x1="1026.5" y1="611" x2="1026.5" y2="641" stroke="#ffffff" stroke-width="1"/>
<line x1="1033.5" y1="611" x2="1033.5" y2="641" stroke="#ffffff" stroke-width="1"/>
<line x1="1042.5" y1="611" x2="1042.5" y2="641" stroke="#ffffff" stroke-width="1"/>
<rect x="1042.5" y="611.5" width="27" height="30" stroke="#ffffff" fill="none" stroke-width="1"/>
<line x1="1042" y1="626.5" x2="1069" y2="626.5" stroke="#ffffff" stroke-width="1"/>
<line x1="1042" y1="631.5" x2="1069" y2="631.5" stroke="#ffffff" stroke-width="1"/>
<line x1="1042" y1="636.5" x2="1069" y2="636.5" stroke="#ffffff" stroke-width="1"/>
<line x1="1047.5" y1="631" x2="1047.5" y2="636" stroke="#ffffff" stroke-width="1"/>
<line x1="1051.5" y1="631" x2="1051.5" y2="636" stroke="#ffffff" stroke-width="1"/>
<line x1="1055.5" y1="631" x2="1055.5" y2="636" stroke="#ffffff" stroke-width="1"/>
<line x1="1060.5" y1="631" x2="1060.5" y2="636" stroke="#ffffff" stroke-width="1"/>
<line x1="1064.5" y1="631" x2="1064.5" y2="636" stroke="#ffffff" stroke-width="1"/>
<rect x="1069.5" y="611.5" width="27" height="30" stroke="#ffffff" fill="none" stroke-width="1"/>
<line x1="1069" y1="620.5" x2="1096" y2="620.5" stroke="#ffffff" stroke-width="1"/>
<line x1="1069" y1="631.5" x2="1096" y2="631.5" stroke="#ffffff" stroke-width="1"/>
<line x1="1069" y1="636.5" x2="1096" y2="636.5" stroke="#ffffff" stroke-width="1"/>
<rect x="1072.5" y="623.5" width="22" height="5" stroke="#00ff00" fill="none" stroke-width="1"/>
<rect x="998.5" y="623.5" width="4" height="3" stroke="#00ff00" fill="none" stroke-width="1"/>
<rect x="1003.5" y="623.5" width="5" height="3" stroke="#00ff00" fill="none" stroke-width="1"/>
<rect x="1009.5" y="623.5" width="8" height="3" stroke="#00ff00" fill="none" stroke-width="1"/>
<rect x="1018.5" y="623.5" width="7" height="3" stroke="#00ff00" fill="none" stroke-width="1"/>
<rect x="1026.5" y="623.5" width="6" height="3" stroke="#00ff00" fill="none" stroke-width="1"/>
<rect x="1033.5" y="623.5" width="8" height="3" stroke="#00ff00" fill="none" stroke-width="1"/>
<rect x="998.5" y="627.5" width="4" height="3" stroke="#00ff00" fill="none" stroke-width="1"/>
<rect x="1009.5" y="627.5" width="16" height="3" stroke="#00ff00" fill="none" stroke-width="1"/>
<rect x="998.5" y="632.5" width="4" height="8" stroke="#00ff00" fill="none" stroke-width="1"/>
<rect x="1025.5" y="637.5" width="6" height="3" stroke="#00ff00" fill="none" stroke-width="1"/>
<rect x="1044.5" y="627.5" width="9" height="3" stroke="#00ff00" fill="none" stroke-width="1"/>
<rect x="1056.5" y="627.5" width="4" height="3" stroke="#00ff00" fill="none" stroke-width="1"/>
<rect x="1064.5" y="627.5" width="4" height="3" stroke="#00ff00" fill="none" stroke-width="1"/>
<rect x="1064.5" y="632.5" width="4" height="3" stroke="#00ff00" fill="none" stroke-width="1"/>
<rect x="1044.5" y="637.5" width="3" height="3" stroke="#00ff00" fill="none" stroke-width="1"/>
<rect x="1051.5" y="637.5" width="3" height="3" stroke="#00ff00" fill="none" stroke-width="1"/>
<rect x="1057.5" y="637.5" width="3" height="3" stroke="#00ff00" fill="none" stroke-width="1"/>
<rect x="1064.5" y="637.5" width="3" height="3" stroke="#00ff00" fill="none" stroke-width="1"/>
</svg>
<!-- left panel -->
<div class="a" style="left:0;top:88px;width:25px;height:664px;background:#e8e8e8"></div>
<div class="a" style="left:0;top:95px;width:1px;height:657px;background:#d0d0d0"></div>
<svg class="a" style="left:4px;top:94px" width="18" height="18">
  <rect x="1" y="1" width="15" height="16" fill="#ebe9d6"/>
  <path d="M1.5 9.5 V7.5 Q2 4.2 5.5 3.8" fill="none" stroke="#111" stroke-width="1.2"/>
  <path d="M5 1.3 L8.3 3.8 L5 6.3Z" fill="#111"/>
  <rect x="9.5" y="1.5" width="6.5" height="2.5" rx="1.2" fill="#fff" stroke="#222" stroke-width="1"/>
  <rect x="11.5" y="4" width="2" height="5.5" fill="#fff" stroke="#222" stroke-width="1"/>
  <rect x="1.5" y="11" width="13.5" height="5" rx="1.8" fill="#fff" stroke="#222" stroke-width="1.1"/>
  <path d="M3.5 13.5 H6.5" stroke="#555" stroke-width="1"/><circle cx="8.5" cy="13.5" r=".9" fill="none" stroke="#555" stroke-width=".6"/><rect x="11.5" y="12.5" width="1.5" height="2" fill="#777"/>
</svg>
<div class="a" style="left:4px;top:111px;width:16px;height:28px;overflow:hidden"><div style="transform:rotate(90deg);transform-origin:0 0;position:absolute;left:16px;top:1px;font-size:13px;line-height:14px;color:#222;white-space:nowrap">图纸集</div></div>
<!-- document tab -->
<svg class="a" style="left:25px;top:89px" width="205" height="22">
  <path d="M0.5 21 L20 1.5 H197 Q201.5 1.5 201.5 6 V21" fill="#fff" stroke="#a9a9a9" stroke-width="1"/>
  <path d="M189 8.5 L196 15.5 M196 8.5 L189 15.5" stroke="#555" stroke-width="1.4"/>
</svg>
<div class="a" style="left:60px;top:93px;font-size:13px;line-height:14px;font-weight:bold;color:#333;white-space:nowrap;letter-spacing:0.45px">车床主轴箱装配图.dwg</div>
<!-- bottom -->
<svg class="a" style="left:25px;top:752px" width="180" height="18">
  <g fill="#666">
    <rect x="3" y="5" width="1.3" height="8"/><path d="M5 9 L9 5 V13Z"/>
    <path d="M19 9 L23 5 V13Z"/>
    <path d="M37 5 L41 9 L37 13Z"/>
    <path d="M51 5 L55 9 L51 13Z"/><rect x="56" y="5" width="1.3" height="8"/>
  </g>
  <path d="M102 0 L114 16 H161.8 L170 0" fill="#ebebeb" stroke="#8a8a8a" stroke-width="1"/>
  <path d="M65 0 L72.8 16 H105 L112.8 0 Z" fill="#fff"/>
  <path d="M65 0 L72.8 16 H105 L112.8 0" fill="none" stroke="#8a8a8a" stroke-width="1"/>
</svg>
<div class="a" style="left:99px;top:753px;font-size:13.5px;line-height:14px;font-weight:bold;color:#222">模型</div>
<div class="a" style="left:141px;top:753px;font-size:12.5px;line-height:14px;color:#333;letter-spacing:-0.3px">Layout1</div>
<div class="a" style="left:25px;top:769px;width:1228px;height:6px;background:#cbcbcb"></div>
<div class="a" style="left:29px;top:779px;font-size:13px;line-height:14px;color:#333">命令行</div>

</body></html>
